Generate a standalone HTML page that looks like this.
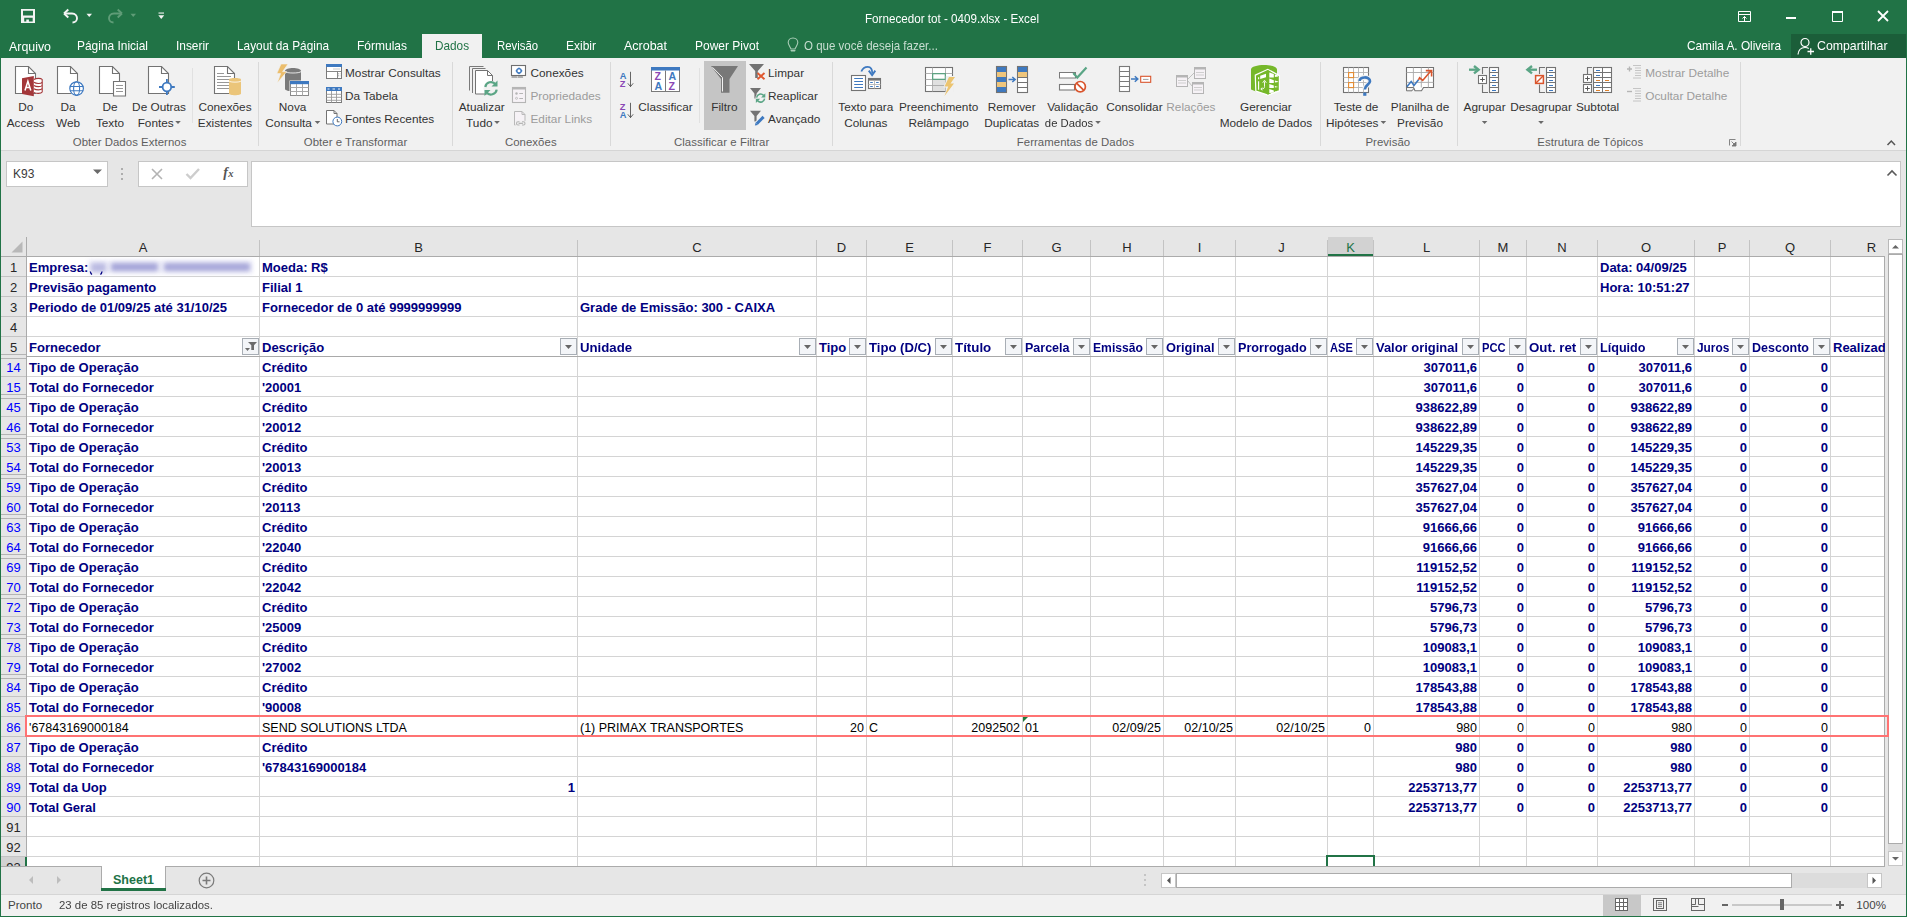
<!DOCTYPE html><html><head><meta charset="utf-8"><style>
*{margin:0;padding:0;box-sizing:border-box}
html,body{width:1907px;height:917px;overflow:hidden;background:#217346}
body{position:relative;font-family:"Liberation Sans",sans-serif}
.t{position:absolute;white-space:nowrap}
.r{position:absolute;display:block}
</style></head><body><div class="r" style="left:0px;top:0px;width:1907px;height:917px;background:#217346;"></div>
<div class="t " style="top:11.82px;font-size:12.8px;line-height:14.30px;color:#ffffff;left:552px;width:800px;text-align:center;transform:scaleX(0.9094);transform-origin:400px 0;">Fornecedor tot - 0409.xlsx - Excel</div>
<div class="r" style="left:422px;top:34px;width:60px;height:24px;background:#f1f1f1;"></div>
<div class="t " style="top:39.60px;font-size:12.6px;line-height:14.07px;color:#ffffff;left:9px;transform:scaleX(0.9839);transform-origin:0 0;">Arquivo</div>
<div class="t " style="top:38.60px;font-size:12.6px;line-height:14.07px;color:#ffffff;left:77px;transform:scaleX(0.9480);transform-origin:0 0;">Página Inicial</div>
<div class="t " style="top:38.60px;font-size:12.6px;line-height:14.07px;color:#ffffff;left:176px;transform:scaleX(0.9437);transform-origin:0 0;">Inserir</div>
<div class="t " style="top:38.60px;font-size:12.6px;line-height:14.07px;color:#ffffff;left:237px;transform:scaleX(0.9388);transform-origin:0 0;">Layout da Página</div>
<div class="t " style="top:38.60px;font-size:12.6px;line-height:14.07px;color:#ffffff;left:357px;transform:scaleX(0.9532);transform-origin:0 0;">Fórmulas</div>
<div class="t " style="top:38.60px;font-size:12.6px;line-height:14.07px;color:#ffffff;left:497px;transform:scaleX(0.9014);transform-origin:0 0;">Revisão</div>
<div class="t " style="top:38.60px;font-size:12.6px;line-height:14.07px;color:#ffffff;left:566px;transform:scaleX(0.9529);transform-origin:0 0;">Exibir</div>
<div class="t " style="top:38.60px;font-size:12.6px;line-height:14.07px;color:#ffffff;left:624px;transform:scaleX(0.9910);transform-origin:0 0;">Acrobat</div>
<div class="t " style="top:38.60px;font-size:12.6px;line-height:14.07px;color:#ffffff;left:695px;transform:scaleX(0.9526);transform-origin:0 0;">Power Pivot</div>
<div class="t " style="top:38.60px;font-size:12.6px;line-height:14.07px;color:#217346;left:435px;transform:scaleX(0.9343);transform-origin:0 0;">Dados</div>
<div class="t " style="top:40.46px;font-size:12.2px;line-height:13.63px;color:#c7ddd0;left:804px;transform:scaleX(0.9458);transform-origin:0 0;">O que você deseja fazer...</div>
<div class="t " style="top:38.60px;font-size:12.6px;line-height:14.07px;color:#ffffff;left:1687px;transform:scaleX(0.9394);transform-origin:0 0;">Camila A. Oliveira</div>
<div class="r" style="left:1791px;top:34px;width:115px;height:24px;background:#1b5e39;"></div>
<div class="t " style="top:38.60px;font-size:12.6px;line-height:14.07px;color:#ffffff;left:1817px;transform:scaleX(0.9785);transform-origin:0 0;">Compartilhar</div>
<div class="r" style="left:1px;top:58px;width:1905px;height:92px;background:#f1f1f1;"></div>
<div class="r" style="left:1px;top:150px;width:1905px;height:1px;background:#d5d5d5;"></div>
<div class="r" style="left:1px;top:151px;width:1905px;height:86px;background:#e6e6e6;"></div>
<svg class="r" style="left:21px;top:9px" width="14" height="14" viewBox="0 0 14 14"><path fill-rule="evenodd" fill="#f4f4f4" d="M0 0H14V14H0Z M2 1.7H12V6.6H2Z M3.2 8.8H11.7V12.4H3.2Z M5.3 10.4H7.9V12.4H5.3Z"/></svg>
<svg class="r" style="left:62px;top:8px" width="18" height="16" viewBox="0 0 18 16"><path d="M3 5.5 H10 C13.5 5.5 15 8 15 10.3 C15 12.8 13 14.5 10.5 14.5" fill="none" stroke="#f4f4f4" stroke-width="1.9"/><path d="M2 5.5 L6.3 1.5 M2 5.5 L6.3 9.5" stroke="#f4f4f4" stroke-width="1.9" fill="none"/></svg>
<svg class="r" style="left:86px;top:13px" width="7" height="5" viewBox="0 0 7 5"><path d="M0.5 0.8 H6 L3.25 4 Z" fill="#f4f4f4"/></svg>
<svg class="r" style="left:106px;top:8px" width="18" height="16" viewBox="0 0 18 16"><g transform="translate(18,0) scale(-1,1)"><path d="M3 5.5 H10 C13.5 5.5 15 8 15 10.3 C15 12.8 13 14.5 10.5 14.5" fill="none" stroke="#5f9c77" stroke-width="1.9"/><path d="M2 5.5 L6.3 1.5 M2 5.5 L6.3 9.5" stroke="#5f9c77" stroke-width="1.9" fill="none"/></g></svg>
<svg class="r" style="left:130px;top:13px" width="7" height="5" viewBox="0 0 7 5"><path d="M0.5 0.8 H6 L3.25 4 Z" fill="#5f9c77"/></svg>
<svg class="r" style="left:158px;top:12px" width="7" height="8" viewBox="0 0 7 8"><path d="M0.5 0.5 H6 V1.6 H0.5 Z" fill="#f4f4f4"/><path d="M0.3 3.3 H6.2 L3.25 7 Z" fill="#f4f4f4"/></svg>
<svg class="r" style="left:1738px;top:11px" width="14" height="11" viewBox="0 0 14 11"><path d="M0.5 0.5 H12.5 V10.5 H0.5 Z M0.5 3.5 H12.5" fill="none" stroke="#fff" stroke-width="1"/><path d="M6.5 10.5 V5.5 M4.5 7.5 L6.5 5.5 L8.5 7.5" fill="none" stroke="#fff" stroke-width="1"/></svg>
<div class="r" style="left:1786px;top:17px;width:10px;height:2px;background:#ffffff;"></div>
<svg class="r" style="left:1832px;top:11px" width="11" height="11" viewBox="0 0 11 11"><path d="M0.5 1 H10.5 V10.5 H0.5 Z" fill="none" stroke="#fff" stroke-width="1"/><path d="M0 0 H11 V2 H0Z" fill="#fff"/></svg>
<svg class="r" style="left:1877px;top:10px" width="12" height="12" viewBox="0 0 12 12"><path d="M1 1 L11 11 M11 1 L1 11" stroke="#fff" stroke-width="1.8"/></svg>
<svg class="r" style="left:787px;top:37px" width="12" height="16" viewBox="0 0 12 16"><path d="M6 1 C3 1 1.2 3.3 1.2 5.6 C1.2 7.9 3.3 9.8 4 12 H8 C8.7 9.8 10.8 7.9 10.8 5.6 C10.8 3.3 9 1 6 1 Z" fill="none" stroke="#aacdb7" stroke-width="1.1"/><path d="M3.4 13 H8.6 L8 14.5 H4 Z" fill="#aacdb7"/></svg>
<svg class="r" style="left:1797px;top:37px" width="18" height="19" viewBox="0 0 18 19"><circle cx="8" cy="5.5" r="4" fill="none" stroke="#fff" stroke-width="1.2"/><path d="M1 17.5 C1.5 12.5 4 10.5 8 10.5 C9.5 10.5 10.8 10.8 11.8 11.5" fill="none" stroke="#fff" stroke-width="1.2"/><path d="M10.5 14.5 H17 M13.75 11.2 V17.8" stroke="#fff" stroke-width="1.3"/></svg>
<div class="r" style="left:258px;top:62px;width:1px;height:84px;background:#d9d9d9;"></div>
<div class="r" style="left:452px;top:62px;width:1px;height:84px;background:#d9d9d9;"></div>
<div class="r" style="left:610px;top:62px;width:1px;height:84px;background:#d9d9d9;"></div>
<div class="r" style="left:832px;top:62px;width:1px;height:84px;background:#d9d9d9;"></div>
<div class="r" style="left:1320px;top:62px;width:1px;height:84px;background:#d9d9d9;"></div>
<div class="r" style="left:1457px;top:62px;width:1px;height:84px;background:#d9d9d9;"></div>
<div class="r" style="left:1740px;top:62px;width:1px;height:84px;background:#d9d9d9;"></div>
<div class="r" style="left:192px;top:68px;width:1px;height:55px;background:#e1e1e1;"></div>
<div class="r" style="left:699px;top:68px;width:1px;height:55px;background:#e1e1e1;"></div>
<div class="t " style="top:135.68px;font-size:11.4px;line-height:12.73px;color:#5e5e5e;left:-270.4px;width:800px;text-align:center;letter-spacing:0.05px;">Obter Dados Externos</div>
<div class="t " style="top:135.68px;font-size:11.4px;line-height:12.73px;color:#5e5e5e;left:-44.5px;width:800px;text-align:center;letter-spacing:0.05px;">Obter e Transformar</div>
<div class="t " style="top:135.68px;font-size:11.4px;line-height:12.73px;color:#5e5e5e;left:130.79999999999995px;width:800px;text-align:center;letter-spacing:0.05px;">Conexões</div>
<div class="t " style="top:135.68px;font-size:11.4px;line-height:12.73px;color:#5e5e5e;left:321.70000000000005px;width:800px;text-align:center;letter-spacing:0.05px;">Classificar e Filtrar</div>
<div class="t " style="top:135.68px;font-size:11.4px;line-height:12.73px;color:#5e5e5e;left:675.5px;width:800px;text-align:center;letter-spacing:0.05px;">Ferramentas de Dados</div>
<div class="t " style="top:135.68px;font-size:11.4px;line-height:12.73px;color:#5e5e5e;left:987.8px;width:800px;text-align:center;letter-spacing:0.05px;">Previsão</div>
<div class="t " style="top:135.68px;font-size:11.4px;line-height:12.73px;color:#5e5e5e;left:1190.3px;width:800px;text-align:center;letter-spacing:0.05px;">Estrutura de Tópicos</div>
<div class="r" style="left:704px;top:61px;width:42px;height:69px;background:#c5c5c5;"></div>
<div class="t " style="top:101.32px;font-size:11.8px;line-height:13.18px;color:#333333;left:-374.3px;width:800px;text-align:center;">Do</div>
<div class="t " style="top:117.32px;font-size:11.8px;line-height:13.18px;color:#333333;left:-374.3px;width:800px;text-align:center;">Access</div>
<div class="t " style="top:101.32px;font-size:11.8px;line-height:13.18px;color:#333333;left:-332px;width:800px;text-align:center;">Da</div>
<div class="t " style="top:117.32px;font-size:11.8px;line-height:13.18px;color:#333333;left:-332px;width:800px;text-align:center;">Web</div>
<div class="t " style="top:101.32px;font-size:11.8px;line-height:13.18px;color:#333333;left:-290px;width:800px;text-align:center;">De</div>
<div class="t " style="top:117.32px;font-size:11.8px;line-height:13.18px;color:#333333;left:-290px;width:800px;text-align:center;">Texto</div>
<div class="t " style="top:101.32px;font-size:11.8px;line-height:13.18px;color:#333333;left:-241px;width:800px;text-align:center;">De Outras</div>
<div class="t " style="top:117.32px;font-size:11.8px;line-height:13.18px;color:#333333;left:-244.3px;width:800px;text-align:center;">Fontes</div>
<div class="t " style="top:101.32px;font-size:11.8px;line-height:13.18px;color:#333333;left:-175px;width:800px;text-align:center;">Conexões</div>
<div class="t " style="top:117.32px;font-size:11.8px;line-height:13.18px;color:#333333;left:-175px;width:800px;text-align:center;">Existentes</div>
<div class="t " style="top:101.32px;font-size:11.8px;line-height:13.18px;color:#333333;left:-107.39999999999998px;width:800px;text-align:center;">Nova</div>
<div class="t " style="top:117.32px;font-size:11.8px;line-height:13.18px;color:#333333;left:-111.39999999999998px;width:800px;text-align:center;">Consulta</div>
<div class="t " style="top:101.32px;font-size:11.8px;line-height:13.18px;color:#333333;left:81.69999999999999px;width:800px;text-align:center;">Atualizar</div>
<div class="t " style="top:117.32px;font-size:11.8px;line-height:13.18px;color:#333333;left:79.30000000000001px;width:800px;text-align:center;">Tudo</div>
<div class="t " style="top:101.32px;font-size:11.8px;line-height:13.18px;color:#333333;left:465.79999999999995px;width:800px;text-align:center;">Texto para</div>
<div class="t " style="top:117.32px;font-size:11.8px;line-height:13.18px;color:#333333;left:465.79999999999995px;width:800px;text-align:center;">Colunas</div>
<div class="t " style="top:101.32px;font-size:11.8px;line-height:13.18px;color:#333333;left:538.6px;width:800px;text-align:center;">Preenchimento</div>
<div class="t " style="top:117.32px;font-size:11.8px;line-height:13.18px;color:#333333;left:538.6px;width:800px;text-align:center;">Relâmpago</div>
<div class="t " style="top:101.32px;font-size:11.8px;line-height:13.18px;color:#333333;left:611.7px;width:800px;text-align:center;">Remover</div>
<div class="t " style="top:117.32px;font-size:11.8px;line-height:13.18px;color:#333333;left:611.7px;width:800px;text-align:center;">Duplicatas</div>
<div class="t " style="top:101.32px;font-size:11.8px;line-height:13.18px;color:#333333;left:672.5999999999999px;width:800px;text-align:center;">Validação</div>
<div class="t " style="top:117.32px;font-size:11.8px;line-height:13.18px;color:#333333;left:668.5px;width:800px;text-align:center;transform:scaleX(0.9561);transform-origin:400px 0;">de Dados</div>
<div class="t " style="top:101.32px;font-size:11.8px;line-height:13.18px;color:#333333;left:956px;width:800px;text-align:center;">Teste de</div>
<div class="t " style="top:117.32px;font-size:11.8px;line-height:13.18px;color:#333333;left:952.2px;width:800px;text-align:center;">Hipóteses</div>
<div class="t " style="top:101.32px;font-size:11.8px;line-height:13.18px;color:#333333;left:1020px;width:800px;text-align:center;">Planilha de</div>
<div class="t " style="top:117.32px;font-size:11.8px;line-height:13.18px;color:#333333;left:1020px;width:800px;text-align:center;">Previsão</div>
<div class="t " style="top:101.32px;font-size:11.8px;line-height:13.18px;color:#333333;left:865.9000000000001px;width:800px;text-align:center;">Gerenciar</div>
<div class="t " style="top:117.32px;font-size:11.8px;line-height:13.18px;color:#333333;left:865.9000000000001px;width:800px;text-align:center;">Modelo de Dados</div>
<div class="t " style="top:101.32px;font-size:11.8px;line-height:13.18px;color:#333333;left:265.5px;width:800px;text-align:center;">Classificar</div>
<div class="t " style="top:101.32px;font-size:11.8px;line-height:13.18px;color:#333333;left:324.4px;width:800px;text-align:center;">Filtro</div>
<div class="t " style="top:101.32px;font-size:11.8px;line-height:13.18px;color:#333333;left:734.4000000000001px;width:800px;text-align:center;">Consolidar</div>
<div class="t " style="top:101.32px;font-size:11.8px;line-height:13.18px;color:#333333;left:1084.6px;width:800px;text-align:center;">Agrupar</div>
<div class="t " style="top:101.32px;font-size:11.8px;line-height:13.18px;color:#333333;left:1141px;width:800px;text-align:center;">Desagrupar</div>
<div class="t " style="top:101.32px;font-size:11.8px;line-height:13.18px;color:#333333;left:1197.6px;width:800px;text-align:center;">Subtotal</div>
<div class="t " style="top:101.32px;font-size:11.8px;line-height:13.18px;color:#9c9c9c;left:790.9000000000001px;width:800px;text-align:center;">Relações</div>
<div class="t " style="top:67.32px;font-size:11.8px;line-height:13.18px;color:#333333;left:345px;">Mostrar Consultas</div>
<div class="t " style="top:90.32px;font-size:11.8px;line-height:13.18px;color:#333333;left:345px;">Da Tabela</div>
<div class="t " style="top:113.32px;font-size:11.8px;line-height:13.18px;color:#333333;left:345px;">Fontes Recentes</div>
<div class="t " style="top:67.32px;font-size:11.8px;line-height:13.18px;color:#333333;left:530.5px;">Conexões</div>
<div class="t " style="top:90.32px;font-size:11.8px;line-height:13.18px;color:#9c9c9c;left:530.5px;">Propriedades</div>
<div class="t " style="top:113.32px;font-size:11.8px;line-height:13.18px;color:#9c9c9c;left:530.5px;">Editar Links</div>
<div class="t " style="top:67.32px;font-size:11.8px;line-height:13.18px;color:#333333;left:768px;">Limpar</div>
<div class="t " style="top:90.32px;font-size:11.8px;line-height:13.18px;color:#333333;left:768px;">Reaplicar</div>
<div class="t " style="top:113.32px;font-size:11.8px;line-height:13.18px;color:#333333;left:768px;">Avançado</div>
<div class="t " style="top:67.32px;font-size:11.8px;line-height:13.18px;color:#9c9c9c;left:1645.3px;">Mostrar Detalhe</div>
<div class="t " style="top:90.32px;font-size:11.8px;line-height:13.18px;color:#9c9c9c;left:1645.3px;">Ocultar Detalhe</div>
<svg class="r" style="left:0px;top:0px" width="1907" height="160" viewBox="0 0 1907 160"><path d="M15.5 66.5 H28.5 L35.5 73.5 V93.5 H15.5 Z" fill="#fff" stroke="#737373" stroke-width="1.1"/><path d="M28.5 66.5 V73.5 H35.5" fill="none" stroke="#737373" stroke-width="1.1"/><path d="M22 78.3 L33.8 76 V96.2 L22 94 Z" fill="#a4373a"/><path d="M25 90.5 L27.9 81.2 L30.8 90.5 M26 87.6 H29.8" fill="none" stroke="#fff" stroke-width="1.5"/><path d="M34 79.5 C36 78 41 78 42.2 79.5 V92 C41 93.8 36 93.8 34 92.4" fill="#fff" stroke="#a4373a" stroke-width="1.1"/><path d="M34 82.3 C36 83.8 41 83.8 42.2 82.3" fill="none" stroke="#a4373a" stroke-width="1.1"/><path d="M34 85.5 C36 87.0 41 87.0 42.2 85.5" fill="none" stroke="#a4373a" stroke-width="1.1"/><path d="M34 88.7 C36 90.2 41 90.2 42.2 88.7" fill="none" stroke="#a4373a" stroke-width="1.1"/><path d="M57.5 66.5 H70.5 L77.5 73.5 V93.5 H57.5 Z" fill="#fff" stroke="#737373" stroke-width="1.1"/><path d="M70.5 66.5 V73.5 H77.5" fill="none" stroke="#737373" stroke-width="1.1"/><circle cx="76.6" cy="88.6" r="7.4" fill="#fff"/><circle cx="76.6" cy="88.6" r="6.8" fill="none" stroke="#3e79c0" stroke-width="1.2"/><ellipse cx="76.6" cy="88.6" rx="3" ry="6.8" fill="none" stroke="#3e79c0" stroke-width="1.1"/><path d="M70 86.5 H83.2 M70 90.8 H83.2" stroke="#3e79c0" stroke-width="1.1"/><path d="M99.5 66.5 H112.5 L119.5 73.5 V93.5 H99.5 Z" fill="#fff" stroke="#737373" stroke-width="1.1"/><path d="M112.5 66.5 V73.5 H119.5" fill="none" stroke="#737373" stroke-width="1.1"/><path d="M113.5 81.5 H125.5 V96 H113.5 Z" fill="#fff" stroke="#737373" stroke-width="1.1"/><path d="M116 85.5 H123 M116 88.5 H123 M116 91.5 H123" stroke="#8a8a8a" stroke-width="0.9"/><path d="M148.5 66.5 H161.5 L168.5 73.5 V93.5 H148.5 Z" fill="#fff" stroke="#737373" stroke-width="1.1"/><path d="M161.5 66.5 V73.5 H168.5" fill="none" stroke="#737373" stroke-width="1.1"/><circle cx="166.9" cy="87" r="4.3" fill="#fff" stroke="#3e79c0" stroke-width="1.8"/><path d="M166.9 79 V82.5 M166.9 91.5 V95 M159 87 H162.5 M171.3 87 H174.8" stroke="#3e79c0" stroke-width="1.8"/><path d="M214.5 66.5 H227.5 L234.5 73.5 V93.5 H214.5 Z" fill="#fff" stroke="#737373" stroke-width="1.1"/><path d="M227.5 66.5 V73.5 H234.5" fill="none" stroke="#737373" stroke-width="1.1"/><path d="M217 73.5 H224 M217 76.5 H231 M217 79.5 H230 M217 82.5 H230 M217 85.5 H230 M217 88.5 H230" stroke="#8c8c8c" stroke-width="0.9"/><path d="M229 79.5 C229 77.5 241 77.5 241 79.5 V93.5 C241 95.8 229 95.8 229 93.5 Z" fill="#ebc57a"/><path d="M229 81 C230 82.5 240 82.5 241 81" fill="none" stroke="#fff" stroke-width="0.8"/><path d="M285 71 C285 67 301 67 301 71 V89 C301 92 285 92 285 89 Z" fill="#7a7a7a"/><path d="M285 71.5 C286 73.5 300 73.5 301 71.5" fill="none" stroke="#f1f1f1" stroke-width="0.9"/><path d="M281 64 H288 L282.6 71.6 H286.8 L277.3 83 L280.6 73.6 H276.8 Z" fill="#ebbd6c" stroke="#f1f1f1" stroke-width="0.6"/><rect x="289.5" y="80.5" width="20" height="16" fill="#f1f1f1"/><rect x="290.5" y="81.5" width="18" height="14" fill="#fff" stroke="#8a8a8a" stroke-width="1"/><rect x="290" y="81" width="19" height="3.2" fill="#3e79c0"/><path d="M290.5 87.5 H308.5 M290.5 91.5 H308.5 M296.5 84 V95.5 M302.5 84 V95.5" stroke="#a8a8a8" stroke-width="1"/><rect x="326.5" y="64.5" width="15" height="14" fill="#fff" stroke="#7a7a7a" stroke-width="1"/><rect x="326" y="64" width="16" height="3" fill="#3e79c0"/><path d="M326.5 71.5 H341.5 M337.5 71.5 V78.5" stroke="#7a7a7a" stroke-width="0.9"/><path d="M333.5 69 H340 M338.2 73.8 H340.5 M338.2 75.8 H340.5" stroke="#7a7a7a" stroke-width="0.8" stroke-dasharray="1 1"/><rect x="326.5" y="87.5" width="15" height="15" fill="#fff" stroke="#7a7a7a" stroke-width="1"/><rect x="326" y="87" width="16" height="4" fill="#3e79c0"/><path d="M327.5 89 H329.5 M332.5 89 H335 M338 89 H340" stroke="#fff" stroke-width="0.9"/><path d="M326.5 94.3 H341.5 M326.5 97.3 H341.5 M326.5 100.3 H341.5 M331.5 91 V102.5 M336.5 91 V102.5" stroke="#9a9a9a" stroke-width="0.9"/><path d="M326.5 110.5 H334.0 L337.0 113.5 V124.0 H326.5 Z" fill="#fff" stroke="#737373" stroke-width="1"/><path d="M334.0 110.5 V113.5 H337.0" fill="none" stroke="#737373" stroke-width="1"/><circle cx="337.3" cy="121.5" r="4.4" fill="#fff" stroke="#3e79c0" stroke-width="1"/><path d="M337.3 119 V121.8 H339.5" fill="none" stroke="#555" stroke-width="0.9"/><path d="M469.5 90.5 V66.5 H483.5" fill="none" stroke="#7a7a7a" stroke-width="1"/><path d="M472.5 93 V68.5 H485.5" fill="none" stroke="#7a7a7a" stroke-width="1"/><path d="M475.5 70.5 H487.5 L492.5 75.5 V94.0 H475.5 Z" fill="#fff" stroke="#737373" stroke-width="1"/><path d="M487.5 70.5 V75.5 H492.5" fill="none" stroke="#737373" stroke-width="1"/><circle cx="491" cy="88.3" r="7.5" fill="#f1f1f1"/><path d="M485.3 87 A5.8 5.8 0 0 1 495.5 84.2" fill="none" stroke="#5aa585" stroke-width="2.2"/><path d="M497.5 80.5 V86.5 H491.5 Z" fill="#5aa585"/><path d="M496.7 89.6 A5.8 5.8 0 0 1 486.5 92.4" fill="none" stroke="#5aa585" stroke-width="2.2"/><path d="M484.5 96 V90 H490.5 Z" fill="#5aa585"/><rect x="511.5" y="65.5" width="14" height="10" fill="#fff" stroke="#6f6f6f" stroke-width="1.1"/><path d="M512 77 H516.5 M518 77 H522.5" stroke="#6f6f6f" stroke-width="1.2" stroke-linecap="round"/><circle cx="519" cy="70.8" r="2.2" fill="none" stroke="#3e79c0" stroke-width="1.3"/><circle cx="519" cy="68.3" r="0.9" fill="#3e79c0"/><circle cx="519" cy="73.3" r="0.9" fill="#3e79c0"/><circle cx="516.5" cy="70.8" r="0.9" fill="#3e79c0"/><circle cx="521.5" cy="70.8" r="0.9" fill="#3e79c0"/><rect x="512.5" y="87.5" width="13" height="15" fill="#f6f2f6" stroke="#b5b5b5" stroke-width="1.1"/><rect x="512" y="87" width="14" height="2.5" fill="#b5b5b5"/><circle cx="516.5" cy="93.5" r="1.2" fill="#b5b5b5"/><circle cx="516.5" cy="98.3" r="1" fill="none" stroke="#b5b5b5" stroke-width="0.8"/><path d="M519.3 93.5 H523 M519.3 98.5 H523" stroke="#b5b5b5" stroke-width="1"/><path d="M514.5 111.5 H522.0 L525.0 114.5 V125.0 H514.5 Z" fill="#f6f2f6" stroke="#b9b9b9" stroke-width="1"/><path d="M522.0 111.5 V114.5 H525.0" fill="none" stroke="#b9b9b9" stroke-width="1"/><rect x="515.5" y="120.8" width="11" height="5.2" fill="#f1f1f1"/><path d="M519.5 121.8 H518 C516 121.8 516 125 518 125 H519.5 M522 121.8 H523.5 C525.5 121.8 525.5 125 523.5 125 H522 M518.6 123.4 H522.9" fill="none" stroke="#b5b5b5" stroke-width="1.1"/><text x="619.8" y="79.1" font-family="Liberation Sans" font-weight="bold" font-size="9.3" fill="#3e79c0">A</text><text x="619.8" y="87.39999999999999" font-family="Liberation Sans" font-weight="bold" font-size="9.3" fill="#8a47b5">Z</text><path d="M630.5 71.8 V86.8 M627.8 83.3 L630.5 86.6 L633.2 83.3" fill="none" stroke="#555" stroke-width="0.9"/><text x="619.8" y="110.1" font-family="Liberation Sans" font-weight="bold" font-size="9.3" fill="#8a47b5">Z</text><text x="619.8" y="118.39999999999999" font-family="Liberation Sans" font-weight="bold" font-size="9.3" fill="#3e79c0">A</text><path d="M630.5 102.8 V117.8 M627.8 114.3 L630.5 117.6 L633.2 114.3" fill="none" stroke="#555" stroke-width="0.9"/><rect x="651.5" y="67.5" width="28" height="24" fill="#fff" stroke="#7a7a7a" stroke-width="1"/><rect x="651" y="67" width="29" height="3.5" fill="#3e79c0"/><path d="M665.5 70.5 V91.5" stroke="#7a7a7a" stroke-width="1"/><text x="654.5" y="80.3" font-family="Liberation Sans" font-weight="bold" font-size="10.6" fill="#8a47b5">Z</text><text x="654.5" y="90.3" font-family="Liberation Sans" font-weight="bold" font-size="10.6" fill="#3e79c0">A</text><text x="668.5" y="80.3" font-family="Liberation Sans" font-weight="bold" font-size="10.6" fill="#3e79c0">A</text><text x="668.5" y="90.3" font-family="Liberation Sans" font-weight="bold" font-size="10.6" fill="#8a47b5">Z</text><path d="M711 66 H738 L729.5 79 V92.7 H721 V79 Z" fill="#787878"/><path d="M712.5 67.3 L722.5 77.5 V91.5" fill="none" stroke="#fff" stroke-width="0.9"/><path d="M749 64 H764 L757.8 71 V78 H755.2 V71 Z" fill="#737373"/><path d="M757.5 73 L764.5 79.3 M764.5 73 L757.5 79.3" stroke="#e0582f" stroke-width="1.9"/><path d="M750 88 H761 L756.6 93.5 V98.5 H754.4 V93.5 Z" fill="#737373"/><circle cx="760.6" cy="98.1" r="5.2" fill="#f1f1f1"/><path d="M756.6 97.6 A4 4 0 0 1 763.6 95.5" fill="none" stroke="#5aa585" stroke-width="1.5"/><path d="M765.3 93.2 V97.4 H761.1 Z" fill="#5aa585"/><path d="M764.6 98.6 A4 4 0 0 1 757.6 100.7" fill="none" stroke="#5aa585" stroke-width="1.5"/><path d="M755.9 103 V98.8 H760.1 Z" fill="#5aa585"/><path d="M750 110.7 H761 L756.6 116 V121.4 H754.4 V116 Z" fill="#737373"/><path d="M756.5 124 L763.5 117" stroke="#f1f1f1" stroke-width="4.6"/><path d="M756.8 123.7 L763.6 116.9" stroke="#3e79c0" stroke-width="3"/><path d="M754.9 125.6 L755.6 122.6 L757.9 124.9 Z" fill="#3e79c0"/><rect x="851.5" y="75.5" width="14" height="15" fill="#fff" stroke="#737373" stroke-width="1.1"/><path d="M854.2 78.5 H863 M854.2 81.5 H863 M854.2 84.5 H863 M854.2 87.5 H863" stroke="#3e79c0" stroke-width="1.2"/><rect x="868.5" y="78.5" width="12" height="10" fill="#fff" stroke="#737373" stroke-width="1.1"/><rect x="868" y="78" width="13" height="2.6" fill="#737373"/><path d="M874.5 80.5 V88.5 M868.5 84.5 H880.5" stroke="#b5b5b5" stroke-width="0.9"/><path d="M870.2 82.5 H872.8 M876.1 82.5 H878.7 M870.2 86.5 H872.8 M876.1 86.5 H878.7" stroke="#3e79c0" stroke-width="1"/><path d="M861.3 71.5 C863 67.5 866 66.8 867.8 66.8 C870.5 66.8 872.3 69 872.3 73.5" fill="none" stroke="#3e79c0" stroke-width="1.8"/><path d="M868.8 70.6 L872.1 75.2 L875.3 70.6" fill="none" stroke="#3e79c0" stroke-width="1.9"/><rect x="925.5" y="67.5" width="27" height="24" fill="#fff" stroke="#737373" stroke-width="1.1"/><path d="M925.5 73.5 H952.5 M925.5 79.5 H952.5 M925.5 85.5 H952.5 M932.5 67.5 V91.5 M945.5 67.5 V91.5" stroke="#a8a8a8" stroke-width="0.9"/><rect x="933" y="80" width="12" height="11" fill="#e0e0e0"/><path d="M933 85.5 H945" stroke="#a8a8a8" stroke-width="0.9"/><rect x="932.7" y="73.7" width="12.6" height="5.6" fill="#fff" stroke="#4d9c76" stroke-width="1.1"/><rect x="945.8" y="76" width="8" height="17" fill="#f1f1f1"/><path d="M948.4 76 H956.6 L951.9 82.7 H955.8 L943.6 97.6 L947.2 87.4 H943.3 Z" fill="#f1f1f1"/><path d="M949 77.1 H955 L950.5 83.5 H954 L944.5 96 L948.2 86.6 H944.5 Z" fill="#ecc470"/><rect x="996.5" y="66.5" width="10" height="26" fill="#3e79c0" stroke="#737373" stroke-width="1.1"/><rect x="997" y="72" width="9" height="5" fill="#eec57c"/><rect x="997" y="82" width="9" height="5" fill="#eec57c"/><rect x="1017.5" y="66.5" width="10" height="26" fill="#fff" stroke="#737373" stroke-width="1.1"/><rect x="1018" y="67" width="9" height="5" fill="#3e79c0"/><rect x="1018" y="72" width="9" height="5" fill="#eec57c"/><path d="M1017.5 77.5 H1027.5 M1017.5 82.5 H1027.5 M1017.5 87.5 H1027.5" stroke="#737373" stroke-width="1"/><path d="M1008.5 79.5 H1015 M1012.3 77 L1015.2 79.5 L1012.3 82" fill="none" stroke="#3e79c0" stroke-width="1.5"/><rect x="1059.5" y="72.5" width="16" height="5.5" fill="#fff" stroke="#7a7a7a" stroke-width="1"/><rect x="1059.5" y="84.5" width="15" height="5.5" fill="#fff" stroke="#7a7a7a" stroke-width="1.1"/><path d="M1073.3 73 L1077.3 77.6 L1086.5 67.5" fill="none" stroke="#5aa585" stroke-width="2.2"/><circle cx="1080.2" cy="86.7" r="5.2" fill="#fff" stroke="#d9542c" stroke-width="1.7"/><path d="M1076.8 83.3 L1083.6 90.1" stroke="#d9542c" stroke-width="1.7"/><rect x="1119.5" y="66.5" width="10" height="25" fill="#fff" stroke="#7a7a7a" stroke-width="1.1"/><path d="M1119.5 71.5 H1129.5 M1119.5 76.5 H1129.5 M1119.5 81.5 H1129.5 M1119.5 86.5 H1129.5" stroke="#7a7a7a" stroke-width="1"/><path d="M1131 79 H1137.5 M1134.8 76.3 L1137.8 79 L1134.8 81.7" fill="none" stroke="#3e79c0" stroke-width="1.5"/><rect x="1140.7" y="76.3" width="10" height="6" fill="#fff" stroke="#d9542c" stroke-width="1.1"/><path d="M1143 79.4 H1148.5" stroke="#888" stroke-width="0.8"/><rect x="1176.5" y="75.5" width="11" height="11" fill="#f6f2f6" stroke="#b5b5b5" stroke-width="1"/><rect x="1176" y="75" width="12" height="2.5" fill="#b5b5b5"/><path d="M1178 80.5 H1186 M1178 83 H1186" stroke="#c5c5c5" stroke-width="0.8"/><rect x="1194.5" y="67.5" width="11" height="11" fill="#f6f2f6" stroke="#b5b5b5" stroke-width="1"/><rect x="1194" y="67" width="12" height="2.5" fill="#b5b5b5"/><path d="M1196 72.5 H1204 M1196 75 H1204" stroke="#c5c5c5" stroke-width="0.8"/><rect x="1192.5" y="82.5" width="11" height="11" fill="#f6f2f6" stroke="#b5b5b5" stroke-width="1"/><rect x="1192" y="82" width="12" height="2.5" fill="#b5b5b5"/><path d="M1194 87.5 H1202 M1194 90 H1202" stroke="#c5c5c5" stroke-width="0.8"/><path d="M1188 79 L1194 73 M1188 81 L1192 86" stroke="#b5b5b5" stroke-width="0.8"/><path d="M1251 69.5 C1251 63.5 1277 63.5 1277 69.5 V76 H1256 V91.5 L1251 89.5 Z" fill="#76b82a"/><path d="M1255.3 75.1 L1267.8 69.3 L1279.4 75.7 V90.8 L1268 95 L1255.8 91 Z" fill="#76b82a" stroke="#fff" stroke-width="1.2"/><path d="M1268 70.5 V94.5" stroke="#76b82a" stroke-width="1.6"/><path d="M1269.3 72.4 L1273.8 74.0 V77.6 L1269.3 77.6 Z" fill="#fff"/><path d="M1274.9 74.4 L1278.2 75.4 V76.6 L1274.9 77.1 Z" fill="#fff"/><path d="M1269.3 78.6 L1273.8 80.19999999999999 V83.0 L1269.3 83.0 Z" fill="#fff"/><path d="M1274.9 80.6 L1278.2 81.6 V82.0 L1274.9 82.5 Z" fill="#fff"/><path d="M1269.3 84.0 L1273.8 85.6 V88.0 L1269.3 88.0 Z" fill="#fff"/><path d="M1274.9 86.0 L1278.2 87.0 V87.0 L1274.9 87.5 Z" fill="#fff"/><path d="M1269.3 89.0 L1273.8 90.6 V92.6 L1269.3 93.0 Z" fill="#fff"/><path d="M1274.9 91.0 L1278.2 92.0 V90.6 L1274.9 92.0 Z" fill="#fff"/><path d="M1258.6 77.2 V79.2 M1258.6 81.3 V89.8" stroke="#fff" stroke-width="1.1"/><path d="M1260.2 75.7 L1266 73.7 V77.3 L1260.2 79 Z" fill="#fff"/><path d="M1264.5 81.5 V86.5 C1264.5 88.2 1263.5 89 1261.5 89" fill="none" stroke="#fff" stroke-width="0.9"/><path d="M1262.7 82.8 L1264.5 80.3 L1266.3 82.8 M1262.3 87.7 L1260.8 89 L1262.3 90.3" fill="none" stroke="#fff" stroke-width="0.9"/><rect x="1343.5" y="67.5" width="25" height="25" fill="#fff" stroke="#737373" stroke-width="1.1"/><path d="M1343.5 72.5 H1368.5 M1343.5 77.5 H1368.5 M1343.5 82.5 H1368.5 M1343.5 87.5 H1368.5 M1348.5 67.5 V92.5 M1353.5 67.5 V92.5 M1358.5 67.5 V92.5 M1363.5 67.5 V92.5" stroke="#b4b4b4" stroke-width="0.9"/><rect x="1348.6" y="72.6" width="5" height="5" fill="#fff" stroke="#e58a2e" stroke-width="1.1"/><rect x="1348.6" y="82.6" width="5" height="5" fill="#fff" stroke="#e58a2e" stroke-width="1.1"/><path d="M1359.6 81 C1359.2 76.5 1370 76 1370 81.3 C1370 84.5 1364.8 85 1364.8 89.5" fill="none" stroke="#f1f1f1" stroke-width="5"/><path d="M1359.6 81 C1359.2 76.5 1370 76 1370 81.3 C1370 84.5 1364.8 85 1364.8 89.5" fill="none" stroke="#3e79c0" stroke-width="2.7"/><rect x="1363.2" y="92.6" width="3.2" height="3.2" fill="#3e79c0"/><path d="M1406.5 67.5 H1433.5 V87.5 H1423.5 L1421.5 90.8 H1415 L1413.5 87.5 H1406.5 Z" fill="#fff" stroke="#737373" stroke-width="1.1"/><path d="M1406.5 87.5 V90.8 H1412 L1413.8 88.5" fill="none" stroke="#737373" stroke-width="1"/><path d="M1406.5 72.5 H1433.5 M1406.5 82.4 H1433.5 M1413.4 67.5 V87.5 M1421.3 67.5 V87.5 M1428.4 67.5 V87.5" stroke="#a8a8a8" stroke-width="0.9"/><path d="M1406.9 86.7 L1411.2 81.5 L1414 85.4 L1418.5 79.8" fill="none" stroke="#3e79c0" stroke-width="1.6"/><path d="M1418.5 79.8 L1419.6 77.8 L1422.7 80.4 L1431.2 70.6" fill="none" stroke="#d9542c" stroke-width="1.6"/><path d="M1425.8 70.6 H1431.6 V76.4" fill="none" stroke="#d9542c" stroke-width="1.6"/><path d="M1488 67.5 H1482.5 V74 M1482.5 84.5 V92.5 H1488" fill="none" stroke="#737373" stroke-width="1.1"/><rect x="1478.5" y="75.5" width="8" height="8" fill="#fff" stroke="#737373" stroke-width="1.1"/><path d="M1480.2 79.5 H1484.8 M1482.5 77.2 V81.8" stroke="#555" stroke-width="1"/><rect x="1489.5" y="67.5" width="9" height="25" fill="#fff" stroke="#737373" stroke-width="1.1"/><path d="M1489.5 72.5 H1498.5" stroke="#737373" stroke-width="1"/><path d="M1489.5 77.5 H1498.5" stroke="#737373" stroke-width="1"/><path d="M1489.5 82.5 H1498.5" stroke="#737373" stroke-width="1"/><path d="M1489.5 87.5 H1498.5" stroke="#737373" stroke-width="1"/><path d="M1492 70.5 H1496" stroke="#3e79c0" stroke-width="1"/><path d="M1492 75.5 H1496" stroke="#3e79c0" stroke-width="1"/><path d="M1492 80.5 H1496" stroke="#3e79c0" stroke-width="1"/><path d="M1492 85.5 H1496" stroke="#3e79c0" stroke-width="1"/><path d="M1492 90.5 H1496" stroke="#3e79c0" stroke-width="1"/><path d="M1469 69.7 H1478.5" stroke="#5aa585" stroke-width="2.3"/><path d="M1474 66 L1478.6 69.7 L1474 73.4" fill="none" stroke="#5aa585" stroke-width="2.4"/><path d="M1545 67.5 H1539.5 V74 M1539.5 84.5 V92.5 H1545" fill="none" stroke="#737373" stroke-width="1.1"/><rect x="1535.6" y="75.6" width="7.8" height="7.8" fill="#fff" stroke="#d9542c" stroke-width="1.5"/><path d="M1536 83 L1543 76" stroke="#d9542c" stroke-width="1.4"/><rect x="1546.5" y="67.5" width="9" height="25" fill="#fff" stroke="#737373" stroke-width="1.1"/><path d="M1546.5 72.5 H1555.5" stroke="#737373" stroke-width="1"/><path d="M1546.5 77.5 H1555.5" stroke="#737373" stroke-width="1"/><path d="M1546.5 82.5 H1555.5" stroke="#737373" stroke-width="1"/><path d="M1546.5 87.5 H1555.5" stroke="#737373" stroke-width="1"/><path d="M1549 70.5 H1553" stroke="#3e79c0" stroke-width="1"/><path d="M1549 75.5 H1553" stroke="#3e79c0" stroke-width="1"/><path d="M1549 80.5 H1553" stroke="#3e79c0" stroke-width="1"/><path d="M1549 85.5 H1553" stroke="#3e79c0" stroke-width="1"/><path d="M1549 90.5 H1553" stroke="#3e79c0" stroke-width="1"/><path d="M1537 69.7 H1527.5" stroke="#5aa585" stroke-width="2.3"/><path d="M1532 66 L1527.4 69.7 L1532 73.4" fill="none" stroke="#5aa585" stroke-width="2.4"/><path d="M1592 67.5 H1587.5 V74.5" fill="none" stroke="#737373" stroke-width="1.1"/><rect x="1583.5" y="74.5" width="8" height="8" fill="#fff" stroke="#737373" stroke-width="1.1"/><path d="M1585.2 78.5 H1589.8 M1587.5 76.2 V80.8" stroke="#555" stroke-width="1"/><rect x="1583.5" y="84.5" width="8" height="8" fill="#fff" stroke="#737373" stroke-width="1.1"/><path d="M1585.2 88.5 H1589.8 M1587.5 86.2 V90.8" stroke="#555" stroke-width="1"/><rect x="1593.5" y="67.5" width="18" height="25" fill="#fff" stroke="#737373" stroke-width="1.1"/><path d="M1593.5 72.5 H1611.5 M1593.5 77.5 H1611.5 M1593.5 82.5 H1611.5 M1593.5 87.5 H1611.5 M1602.5 67.5 V92.5" stroke="#737373" stroke-width="1"/><path d="M1596 70.5 H1600 M1596 75.5 H1600 M1596 85.5 H1600" stroke="#3e79c0" stroke-width="1"/><path d="M1596 80.5 H1600 M1605 80.5 H1609 M1596 90.5 H1600 M1605 90.5 H1609" stroke="#e0832f" stroke-width="1"/><path d="M1627 69 H1632 M1629.5 66.5 V71.5" stroke="#b5b5b5" stroke-width="1.4"/><path d="M1633 65.5 H1641 M1635 68 H1641 M1635 70.5 H1641 M1635 73 H1641 M1635 75.5 H1641 M1633 78 H1641" stroke="#c0c0c0" stroke-width="0.9"/><path d="M1627 91.5 H1632" stroke="#b5b5b5" stroke-width="1.4"/><path d="M1633 88.5 H1641 M1635 91 H1641 M1635 93.5 H1641 M1635 96 H1641 M1635 98.5 H1641 M1633 101 H1641" stroke="#c0c0c0" stroke-width="0.9"/><path d="M1729.5 145.5 V139.5 H1735.5" fill="none" stroke="#777" stroke-width="0.9"/><path d="M1731.5 141.5 L1735.5 145.5 M1736 142 V146 H1732 Z" fill="#777" stroke="#777" stroke-width="0.9"/><path d="M1887.5 145 L1891.3 141 L1895 145" fill="none" stroke="#555" stroke-width="1.5"/><path d="M175.2 121.0 H180.8 L178 124.0 Z" fill="#6a6a6a"/><path d="M314.7 121.0 H320.3 L317.5 124.0 Z" fill="#6a6a6a"/><path d="M494.2 121.0 H499.8 L497 124.0 Z" fill="#6a6a6a"/><path d="M1095.2 121.0 H1100.8 L1098 124.0 Z" fill="#6a6a6a"/><path d="M1380.6000000000001 121.0 H1386.2 L1383.4 124.0 Z" fill="#6a6a6a"/><path d="M1481.8 121.0 H1487.3999999999999 L1484.6 124.0 Z" fill="#6a6a6a"/><path d="M1538.2 121.0 H1543.8 L1541 124.0 Z" fill="#6a6a6a"/></svg>
<div class="r" style="left:6px;top:161px;width:102px;height:26px;background:#ffffff;border:1px solid #c6c6c6;"></div>
<div class="t " style="top:168.14px;font-size:12px;line-height:13.40px;color:#3a3a3a;left:13px;">K93</div>
<div class="r" style="left:138px;top:161px;width:110px;height:26px;background:#ffffff;border:1px solid #c6c6c6;"></div>
<div class="r" style="left:251px;top:161px;width:650px;height:66px;background:#ffffff;border:1px solid #c6c6c6;"></div>
<div class="r" style="left:900px;top:161px;width:1001px;height:66px;background:#ffffff;border:1px solid #c6c6c6;border-left:none;"></div>
<svg class="r" style="left:92px;top:168px" width="12" height="8" viewBox="0 0 12 8"><path d="M1 1.5 H10 L5.5 6 Z" fill="#6a6a6a"/></svg>
<svg class="r" style="left:120px;top:166px" width="4" height="16" viewBox="0 0 4 16"><circle cx="2" cy="3" r="1" fill="#9a9a9a"/><circle cx="2" cy="8" r="1" fill="#9a9a9a"/><circle cx="2" cy="13" r="1" fill="#9a9a9a"/></svg>
<svg class="r" style="left:150px;top:168px" width="14" height="12" viewBox="0 0 14 12"><path d="M2 1 L12 11 M12 1 L2 11" stroke="#b3b3b3" stroke-width="1.6"/></svg>
<svg class="r" style="left:185px;top:167px" width="16" height="13" viewBox="0 0 16 13"><path d="M1.5 7 L5.5 11 L14 2" fill="none" stroke="#cdcdcd" stroke-width="2.4"/></svg>
<div class="t " style="top:164.83px;font-size:14px;line-height:15.64px;color:#555555;left:223.3px;font-style:italic;font-family:'Liberation Serif',serif;font-weight:bold;">f</div>
<div class="t " style="top:168.30px;font-size:10.5px;line-height:11.73px;color:#555555;left:228.3px;font-style:italic;font-family:'Liberation Serif',serif;font-weight:bold;">x</div>
<svg class="r" style="left:1886px;top:169px" width="12" height="8" viewBox="0 0 12 8"><path d="M1.5 6.5 L6 2 L10.5 6.5" fill="none" stroke="#5a5a5a" stroke-width="1.6"/></svg>
<div class="r" style="left:1px;top:237px;width:1884px;height:20px;background:#e6e6e6;"></div>
<div class="r" style="left:1px;top:257px;width:25px;height:609px;background:#e6e6e6;"></div>
<div class="r" style="left:27px;top:257px;width:1858px;height:609px;background:#ffffff;"></div>
<div class="r" style="left:259px;top:257px;width:1px;height:609px;background:#d4d4d4;"></div>
<div class="r" style="left:259px;top:240px;width:1px;height:17px;background:#c3c3c3;"></div>
<div class="r" style="left:577px;top:257px;width:1px;height:609px;background:#d4d4d4;"></div>
<div class="r" style="left:577px;top:240px;width:1px;height:17px;background:#c3c3c3;"></div>
<div class="r" style="left:816px;top:257px;width:1px;height:609px;background:#d4d4d4;"></div>
<div class="r" style="left:816px;top:240px;width:1px;height:17px;background:#c3c3c3;"></div>
<div class="r" style="left:866px;top:257px;width:1px;height:609px;background:#d4d4d4;"></div>
<div class="r" style="left:866px;top:240px;width:1px;height:17px;background:#c3c3c3;"></div>
<div class="r" style="left:952px;top:257px;width:1px;height:609px;background:#d4d4d4;"></div>
<div class="r" style="left:952px;top:240px;width:1px;height:17px;background:#c3c3c3;"></div>
<div class="r" style="left:1022px;top:257px;width:1px;height:609px;background:#d4d4d4;"></div>
<div class="r" style="left:1022px;top:240px;width:1px;height:17px;background:#c3c3c3;"></div>
<div class="r" style="left:1090px;top:257px;width:1px;height:609px;background:#d4d4d4;"></div>
<div class="r" style="left:1090px;top:240px;width:1px;height:17px;background:#c3c3c3;"></div>
<div class="r" style="left:1163px;top:257px;width:1px;height:609px;background:#d4d4d4;"></div>
<div class="r" style="left:1163px;top:240px;width:1px;height:17px;background:#c3c3c3;"></div>
<div class="r" style="left:1235px;top:257px;width:1px;height:609px;background:#d4d4d4;"></div>
<div class="r" style="left:1235px;top:240px;width:1px;height:17px;background:#c3c3c3;"></div>
<div class="r" style="left:1327px;top:257px;width:1px;height:609px;background:#d4d4d4;"></div>
<div class="r" style="left:1327px;top:240px;width:1px;height:17px;background:#c3c3c3;"></div>
<div class="r" style="left:1373px;top:257px;width:1px;height:609px;background:#d4d4d4;"></div>
<div class="r" style="left:1373px;top:240px;width:1px;height:17px;background:#c3c3c3;"></div>
<div class="r" style="left:1479px;top:257px;width:1px;height:609px;background:#d4d4d4;"></div>
<div class="r" style="left:1479px;top:240px;width:1px;height:17px;background:#c3c3c3;"></div>
<div class="r" style="left:1526px;top:257px;width:1px;height:609px;background:#d4d4d4;"></div>
<div class="r" style="left:1526px;top:240px;width:1px;height:17px;background:#c3c3c3;"></div>
<div class="r" style="left:1597px;top:257px;width:1px;height:609px;background:#d4d4d4;"></div>
<div class="r" style="left:1597px;top:240px;width:1px;height:17px;background:#c3c3c3;"></div>
<div class="r" style="left:1694px;top:257px;width:1px;height:609px;background:#d4d4d4;"></div>
<div class="r" style="left:1694px;top:240px;width:1px;height:17px;background:#c3c3c3;"></div>
<div class="r" style="left:1749px;top:257px;width:1px;height:609px;background:#d4d4d4;"></div>
<div class="r" style="left:1749px;top:240px;width:1px;height:17px;background:#c3c3c3;"></div>
<div class="r" style="left:1830px;top:257px;width:1px;height:609px;background:#d4d4d4;"></div>
<div class="r" style="left:1830px;top:240px;width:1px;height:17px;background:#c3c3c3;"></div>
<div class="t " style="top:241.24px;font-size:13px;line-height:14.52px;color:#262626;left:-257.0px;width:800px;text-align:center;">A</div>
<div class="t " style="top:241.24px;font-size:13px;line-height:14.52px;color:#262626;left:18.5px;width:800px;text-align:center;">B</div>
<div class="t " style="top:241.24px;font-size:13px;line-height:14.52px;color:#262626;left:297.0px;width:800px;text-align:center;">C</div>
<div class="t " style="top:241.24px;font-size:13px;line-height:14.52px;color:#262626;left:441.5px;width:800px;text-align:center;">D</div>
<div class="t " style="top:241.24px;font-size:13px;line-height:14.52px;color:#262626;left:509.5px;width:800px;text-align:center;">E</div>
<div class="t " style="top:241.24px;font-size:13px;line-height:14.52px;color:#262626;left:587.5px;width:800px;text-align:center;">F</div>
<div class="t " style="top:241.24px;font-size:13px;line-height:14.52px;color:#262626;left:656.5px;width:800px;text-align:center;">G</div>
<div class="t " style="top:241.24px;font-size:13px;line-height:14.52px;color:#262626;left:727.0px;width:800px;text-align:center;">H</div>
<div class="t " style="top:241.24px;font-size:13px;line-height:14.52px;color:#262626;left:799.5px;width:800px;text-align:center;">I</div>
<div class="t " style="top:241.24px;font-size:13px;line-height:14.52px;color:#262626;left:881.5px;width:800px;text-align:center;">J</div>
<div class="t " style="top:241.24px;font-size:13px;line-height:14.52px;color:#262626;left:950.5px;width:800px;text-align:center;">K</div>
<div class="t " style="top:241.24px;font-size:13px;line-height:14.52px;color:#262626;left:1026.5px;width:800px;text-align:center;">L</div>
<div class="t " style="top:241.24px;font-size:13px;line-height:14.52px;color:#262626;left:1103.0px;width:800px;text-align:center;">M</div>
<div class="t " style="top:241.24px;font-size:13px;line-height:14.52px;color:#262626;left:1162.0px;width:800px;text-align:center;">N</div>
<div class="t " style="top:241.24px;font-size:13px;line-height:14.52px;color:#262626;left:1246.0px;width:800px;text-align:center;">O</div>
<div class="t " style="top:241.24px;font-size:13px;line-height:14.52px;color:#262626;left:1322.0px;width:800px;text-align:center;">P</div>
<div class="t " style="top:241.24px;font-size:13px;line-height:14.52px;color:#262626;left:1390.0px;width:800px;text-align:center;">Q</div>
<div class="t " style="top:241.24px;font-size:13px;line-height:14.52px;color:#262626;left:1471.5px;width:800px;text-align:center;">R</div>
<svg class="r" style="left:11px;top:241px" width="12" height="12" viewBox="0 0 12 12"><path d="M11.5 0.5 V11.5 H0.5 Z" fill="#b8b8b8"/></svg>
<div class="r" style="left:1px;top:256px;width:1884px;height:1px;background:#ababab;"></div>
<div class="r" style="left:26px;top:237px;width:1px;height:629px;background:#ababab;"></div>
<div class="r" style="left:1px;top:857px;width:25px;height:9px;background:#d2d2d2;"></div>
<div class="r" style="left:25px;top:857px;width:2px;height:9px;background:#217346;"></div>
<div class="r" style="left:27px;top:276px;width:1858px;height:1px;background:#d4d4d4;"></div>
<div class="r" style="left:1px;top:276px;width:25px;height:1px;background:#c3c3c3;"></div>
<div class="t " style="top:261.24px;font-size:13px;line-height:14.52px;color:#262626;left:-386.5px;width:800px;text-align:center;">1</div>
<div class="r" style="left:27px;top:296px;width:1858px;height:1px;background:#d4d4d4;"></div>
<div class="r" style="left:1px;top:296px;width:25px;height:1px;background:#c3c3c3;"></div>
<div class="t " style="top:281.24px;font-size:13px;line-height:14.52px;color:#262626;left:-386.5px;width:800px;text-align:center;">2</div>
<div class="r" style="left:27px;top:316px;width:1858px;height:1px;background:#d4d4d4;"></div>
<div class="r" style="left:1px;top:316px;width:25px;height:1px;background:#c3c3c3;"></div>
<div class="t " style="top:301.24px;font-size:13px;line-height:14.52px;color:#262626;left:-386.5px;width:800px;text-align:center;">3</div>
<div class="r" style="left:27px;top:336px;width:1858px;height:1px;background:#d4d4d4;"></div>
<div class="r" style="left:1px;top:336px;width:25px;height:1px;background:#c3c3c3;"></div>
<div class="t " style="top:321.24px;font-size:13px;line-height:14.52px;color:#262626;left:-386.5px;width:800px;text-align:center;">4</div>
<div class="r" style="left:27px;top:356px;width:1858px;height:1px;background:#d4d4d4;"></div>
<div class="r" style="left:1px;top:354px;width:25px;height:1px;background:#b4b4b4;"></div>
<div class="r" style="left:1px;top:358px;width:25px;height:1px;background:#b4b4b4;"></div>
<div class="t " style="top:341.24px;font-size:13px;line-height:14.52px;color:#262626;left:-386.5px;width:800px;text-align:center;">5</div>
<div class="r" style="left:27px;top:376px;width:1858px;height:1px;background:#d4d4d4;"></div>
<div class="r" style="left:1px;top:376px;width:25px;height:1px;background:#c3c3c3;"></div>
<div class="t " style="top:361.24px;font-size:13px;line-height:14.52px;color:#0000ff;left:-386.5px;width:800px;text-align:center;">14</div>
<div class="r" style="left:27px;top:396px;width:1858px;height:1px;background:#d4d4d4;"></div>
<div class="r" style="left:1px;top:394px;width:25px;height:1px;background:#b4b4b4;"></div>
<div class="r" style="left:1px;top:398px;width:25px;height:1px;background:#b4b4b4;"></div>
<div class="t " style="top:381.24px;font-size:13px;line-height:14.52px;color:#0000ff;left:-386.5px;width:800px;text-align:center;">15</div>
<div class="r" style="left:27px;top:416px;width:1858px;height:1px;background:#d4d4d4;"></div>
<div class="r" style="left:1px;top:416px;width:25px;height:1px;background:#c3c3c3;"></div>
<div class="t " style="top:401.24px;font-size:13px;line-height:14.52px;color:#0000ff;left:-386.5px;width:800px;text-align:center;">45</div>
<div class="r" style="left:27px;top:436px;width:1858px;height:1px;background:#d4d4d4;"></div>
<div class="r" style="left:1px;top:434px;width:25px;height:1px;background:#b4b4b4;"></div>
<div class="r" style="left:1px;top:438px;width:25px;height:1px;background:#b4b4b4;"></div>
<div class="t " style="top:421.24px;font-size:13px;line-height:14.52px;color:#0000ff;left:-386.5px;width:800px;text-align:center;">46</div>
<div class="r" style="left:27px;top:456px;width:1858px;height:1px;background:#d4d4d4;"></div>
<div class="r" style="left:1px;top:456px;width:25px;height:1px;background:#c3c3c3;"></div>
<div class="t " style="top:441.24px;font-size:13px;line-height:14.52px;color:#0000ff;left:-386.5px;width:800px;text-align:center;">53</div>
<div class="r" style="left:27px;top:476px;width:1858px;height:1px;background:#d4d4d4;"></div>
<div class="r" style="left:1px;top:474px;width:25px;height:1px;background:#b4b4b4;"></div>
<div class="r" style="left:1px;top:478px;width:25px;height:1px;background:#b4b4b4;"></div>
<div class="t " style="top:461.24px;font-size:13px;line-height:14.52px;color:#0000ff;left:-386.5px;width:800px;text-align:center;">54</div>
<div class="r" style="left:27px;top:496px;width:1858px;height:1px;background:#d4d4d4;"></div>
<div class="r" style="left:1px;top:496px;width:25px;height:1px;background:#c3c3c3;"></div>
<div class="t " style="top:481.24px;font-size:13px;line-height:14.52px;color:#0000ff;left:-386.5px;width:800px;text-align:center;">59</div>
<div class="r" style="left:27px;top:516px;width:1858px;height:1px;background:#d4d4d4;"></div>
<div class="r" style="left:1px;top:514px;width:25px;height:1px;background:#b4b4b4;"></div>
<div class="r" style="left:1px;top:518px;width:25px;height:1px;background:#b4b4b4;"></div>
<div class="t " style="top:501.24px;font-size:13px;line-height:14.52px;color:#0000ff;left:-386.5px;width:800px;text-align:center;">60</div>
<div class="r" style="left:27px;top:536px;width:1858px;height:1px;background:#d4d4d4;"></div>
<div class="r" style="left:1px;top:536px;width:25px;height:1px;background:#c3c3c3;"></div>
<div class="t " style="top:521.24px;font-size:13px;line-height:14.52px;color:#0000ff;left:-386.5px;width:800px;text-align:center;">63</div>
<div class="r" style="left:27px;top:556px;width:1858px;height:1px;background:#d4d4d4;"></div>
<div class="r" style="left:1px;top:554px;width:25px;height:1px;background:#b4b4b4;"></div>
<div class="r" style="left:1px;top:558px;width:25px;height:1px;background:#b4b4b4;"></div>
<div class="t " style="top:541.24px;font-size:13px;line-height:14.52px;color:#0000ff;left:-386.5px;width:800px;text-align:center;">64</div>
<div class="r" style="left:27px;top:576px;width:1858px;height:1px;background:#d4d4d4;"></div>
<div class="r" style="left:1px;top:576px;width:25px;height:1px;background:#c3c3c3;"></div>
<div class="t " style="top:561.24px;font-size:13px;line-height:14.52px;color:#0000ff;left:-386.5px;width:800px;text-align:center;">69</div>
<div class="r" style="left:27px;top:596px;width:1858px;height:1px;background:#d4d4d4;"></div>
<div class="r" style="left:1px;top:594px;width:25px;height:1px;background:#b4b4b4;"></div>
<div class="r" style="left:1px;top:598px;width:25px;height:1px;background:#b4b4b4;"></div>
<div class="t " style="top:581.24px;font-size:13px;line-height:14.52px;color:#0000ff;left:-386.5px;width:800px;text-align:center;">70</div>
<div class="r" style="left:27px;top:616px;width:1858px;height:1px;background:#d4d4d4;"></div>
<div class="r" style="left:1px;top:616px;width:25px;height:1px;background:#c3c3c3;"></div>
<div class="t " style="top:601.24px;font-size:13px;line-height:14.52px;color:#0000ff;left:-386.5px;width:800px;text-align:center;">72</div>
<div class="r" style="left:27px;top:636px;width:1858px;height:1px;background:#d4d4d4;"></div>
<div class="r" style="left:1px;top:634px;width:25px;height:1px;background:#b4b4b4;"></div>
<div class="r" style="left:1px;top:638px;width:25px;height:1px;background:#b4b4b4;"></div>
<div class="t " style="top:621.24px;font-size:13px;line-height:14.52px;color:#0000ff;left:-386.5px;width:800px;text-align:center;">73</div>
<div class="r" style="left:27px;top:656px;width:1858px;height:1px;background:#d4d4d4;"></div>
<div class="r" style="left:1px;top:656px;width:25px;height:1px;background:#c3c3c3;"></div>
<div class="t " style="top:641.24px;font-size:13px;line-height:14.52px;color:#0000ff;left:-386.5px;width:800px;text-align:center;">78</div>
<div class="r" style="left:27px;top:676px;width:1858px;height:1px;background:#d4d4d4;"></div>
<div class="r" style="left:1px;top:674px;width:25px;height:1px;background:#b4b4b4;"></div>
<div class="r" style="left:1px;top:678px;width:25px;height:1px;background:#b4b4b4;"></div>
<div class="t " style="top:661.24px;font-size:13px;line-height:14.52px;color:#0000ff;left:-386.5px;width:800px;text-align:center;">79</div>
<div class="r" style="left:27px;top:696px;width:1858px;height:1px;background:#d4d4d4;"></div>
<div class="r" style="left:1px;top:696px;width:25px;height:1px;background:#c3c3c3;"></div>
<div class="t " style="top:681.24px;font-size:13px;line-height:14.52px;color:#0000ff;left:-386.5px;width:800px;text-align:center;">84</div>
<div class="r" style="left:27px;top:716px;width:1858px;height:1px;background:#d4d4d4;"></div>
<div class="r" style="left:1px;top:716px;width:25px;height:1px;background:#c3c3c3;"></div>
<div class="t " style="top:701.24px;font-size:13px;line-height:14.52px;color:#0000ff;left:-386.5px;width:800px;text-align:center;">85</div>
<div class="r" style="left:27px;top:736px;width:1858px;height:1px;background:#d4d4d4;"></div>
<div class="r" style="left:1px;top:736px;width:25px;height:1px;background:#c3c3c3;"></div>
<div class="t " style="top:721.24px;font-size:13px;line-height:14.52px;color:#0000ff;left:-386.5px;width:800px;text-align:center;">86</div>
<div class="r" style="left:27px;top:756px;width:1858px;height:1px;background:#d4d4d4;"></div>
<div class="r" style="left:1px;top:756px;width:25px;height:1px;background:#c3c3c3;"></div>
<div class="t " style="top:741.24px;font-size:13px;line-height:14.52px;color:#0000ff;left:-386.5px;width:800px;text-align:center;">87</div>
<div class="r" style="left:27px;top:776px;width:1858px;height:1px;background:#d4d4d4;"></div>
<div class="r" style="left:1px;top:776px;width:25px;height:1px;background:#c3c3c3;"></div>
<div class="t " style="top:761.24px;font-size:13px;line-height:14.52px;color:#0000ff;left:-386.5px;width:800px;text-align:center;">88</div>
<div class="r" style="left:27px;top:796px;width:1858px;height:1px;background:#d4d4d4;"></div>
<div class="r" style="left:1px;top:796px;width:25px;height:1px;background:#c3c3c3;"></div>
<div class="t " style="top:781.24px;font-size:13px;line-height:14.52px;color:#0000ff;left:-386.5px;width:800px;text-align:center;">89</div>
<div class="r" style="left:27px;top:816px;width:1858px;height:1px;background:#d4d4d4;"></div>
<div class="r" style="left:1px;top:816px;width:25px;height:1px;background:#c3c3c3;"></div>
<div class="t " style="top:801.24px;font-size:13px;line-height:14.52px;color:#0000ff;left:-386.5px;width:800px;text-align:center;">90</div>
<div class="r" style="left:27px;top:836px;width:1858px;height:1px;background:#d4d4d4;"></div>
<div class="r" style="left:1px;top:836px;width:25px;height:1px;background:#c3c3c3;"></div>
<div class="t " style="top:821.24px;font-size:13px;line-height:14.52px;color:#262626;left:-386.5px;width:800px;text-align:center;">91</div>
<div class="r" style="left:27px;top:856px;width:1858px;height:1px;background:#d4d4d4;"></div>
<div class="r" style="left:1px;top:856px;width:25px;height:1px;background:#c3c3c3;"></div>
<div class="t " style="top:841.24px;font-size:13px;line-height:14.52px;color:#262626;left:-386.5px;width:800px;text-align:center;">92</div>
<div class="r" style="left:27px;top:876px;width:1858px;height:1px;background:#d4d4d4;"></div>
<div class="r" style="left:1px;top:876px;width:25px;height:1px;background:#c3c3c3;"></div>
<div class="t " style="top:861.24px;font-size:13px;line-height:14.52px;color:#262626;left:-386.5px;width:800px;text-align:center;">93</div>
<div class="r" style="left:27px;top:356px;width:1858px;height:1px;background:#a9a9a9;"></div>
<div class="r" style="left:1884px;top:256px;width:1px;height:610px;background:#ababab;"></div>
<div class="t " style="top:261.24px;font-size:13px;line-height:14.52px;color:#000080;font-weight:bold;left:29px;">Empresa:</div>
<div class="t " style="top:261.24px;font-size:13px;line-height:14.52px;color:#000080;font-weight:bold;left:262px;">Moeda: R$</div>
<div class="t " style="top:261.24px;font-size:13px;line-height:14.52px;color:#000080;font-weight:bold;left:1600px;">Data: 04/09/25</div>
<div class="t " style="top:281.24px;font-size:13px;line-height:14.52px;color:#000080;font-weight:bold;left:29px;">Previsão pagamento</div>
<div class="t " style="top:281.24px;font-size:13px;line-height:14.52px;color:#000080;font-weight:bold;left:262px;">Filial 1</div>
<div class="t " style="top:281.24px;font-size:13px;line-height:14.52px;color:#000080;font-weight:bold;left:1600px;">Hora: 10:51:27</div>
<div class="t " style="top:301.24px;font-size:13px;line-height:14.52px;color:#000080;font-weight:bold;left:29px;">Periodo de 01/09/25 até 31/10/25</div>
<div class="t " style="top:301.24px;font-size:13px;line-height:14.52px;color:#000080;font-weight:bold;left:262px;">Fornecedor de 0 até 9999999999</div>
<div class="t " style="top:301.24px;font-size:13px;line-height:14.52px;color:#000080;font-weight:bold;left:580px;">Grade de Emissão: 300 - CAIXA</div>
<div class="t " style="top:341.24px;font-size:13px;line-height:14.52px;color:#000080;font-weight:bold;left:29px;">Fornecedor</div>
<div class="t " style="top:341.24px;font-size:13px;line-height:14.52px;color:#000080;font-weight:bold;left:262px;">Descrição</div>
<div class="t " style="top:341.24px;font-size:13px;line-height:14.52px;color:#000080;font-weight:bold;left:580px;transform:scaleX(1.0160);transform-origin:0 0;">Unidade</div>
<div class="t " style="top:341.24px;font-size:13px;line-height:14.52px;color:#000080;font-weight:bold;left:819px;">Tipo</div>
<div class="t " style="top:341.24px;font-size:13px;line-height:14.52px;color:#000080;font-weight:bold;left:869px;transform:scaleX(1.0090);transform-origin:0 0;">Tipo (D/C)</div>
<div class="t " style="top:341.24px;font-size:13px;line-height:14.52px;color:#000080;font-weight:bold;left:955px;transform:scaleX(1.0238);transform-origin:0 0;">Título</div>
<div class="t " style="top:341.24px;font-size:13px;line-height:14.52px;color:#000080;font-weight:bold;left:1025px;transform:scaleX(0.9615);transform-origin:0 0;">Parcela</div>
<div class="t " style="top:341.24px;font-size:13px;line-height:14.52px;color:#000080;font-weight:bold;left:1093px;transform:scaleX(0.9349);transform-origin:0 0;">Emissão</div>
<div class="t " style="top:341.24px;font-size:13px;line-height:14.52px;color:#000080;font-weight:bold;left:1166px;transform:scaleX(0.9876);transform-origin:0 0;">Original</div>
<div class="t " style="top:341.24px;font-size:13px;line-height:14.52px;color:#000080;font-weight:bold;left:1238px;transform:scaleX(0.9720);transform-origin:0 0;">Prorrogado</div>
<div class="t " style="top:341.24px;font-size:13px;line-height:14.52px;color:#000080;font-weight:bold;left:1330px;transform:scaleX(0.8528);transform-origin:0 0;">ASE</div>
<div class="t " style="top:341.24px;font-size:13px;line-height:14.52px;color:#000080;font-weight:bold;left:1376px;transform:scaleX(0.9958);transform-origin:0 0;">Valor original</div>
<div class="t " style="top:341.24px;font-size:13px;line-height:14.52px;color:#000080;font-weight:bold;left:1482px;transform:scaleX(0.8596);transform-origin:0 0;">PCC</div>
<div class="t " style="top:341.24px;font-size:13px;line-height:14.52px;color:#000080;font-weight:bold;left:1529px;transform:scaleX(1.0234);transform-origin:0 0;">Out. ret</div>
<div class="t " style="top:341.24px;font-size:13px;line-height:14.52px;color:#000080;font-weight:bold;left:1600px;transform:scaleX(0.9700);transform-origin:0 0;">Líquido</div>
<div class="t " style="top:341.24px;font-size:13px;line-height:14.52px;color:#000080;font-weight:bold;left:1697px;transform:scaleX(0.9123);transform-origin:0 0;">Juros</div>
<div class="t " style="top:341.24px;font-size:13px;line-height:14.52px;color:#000080;font-weight:bold;left:1752px;transform:scaleX(0.9623);transform-origin:0 0;">Desconto</div>
<div class="t " style="top:341.24px;font-size:13px;line-height:14.52px;color:#000080;font-weight:bold;left:1833px;">Realizado</div>
<div class="t " style="top:361.24px;font-size:13px;line-height:14.52px;color:#000080;font-weight:bold;left:29px;">Tipo de Operação</div>
<div class="t " style="top:361.24px;font-size:13px;line-height:14.52px;color:#000080;font-weight:bold;left:262px;">Crédito</div>
<div class="t " style="top:361.24px;font-size:13px;line-height:14.52px;color:#000080;font-weight:bold;left:677px;width:800px;text-align:right;">307011,6</div>
<div class="t " style="top:361.24px;font-size:13px;line-height:14.52px;color:#000080;font-weight:bold;left:724px;width:800px;text-align:right;">0</div>
<div class="t " style="top:361.24px;font-size:13px;line-height:14.52px;color:#000080;font-weight:bold;left:795px;width:800px;text-align:right;">0</div>
<div class="t " style="top:361.24px;font-size:13px;line-height:14.52px;color:#000080;font-weight:bold;left:892px;width:800px;text-align:right;">307011,6</div>
<div class="t " style="top:361.24px;font-size:13px;line-height:14.52px;color:#000080;font-weight:bold;left:947px;width:800px;text-align:right;">0</div>
<div class="t " style="top:361.24px;font-size:13px;line-height:14.52px;color:#000080;font-weight:bold;left:1028px;width:800px;text-align:right;">0</div>
<div class="t " style="top:381.24px;font-size:13px;line-height:14.52px;color:#000080;font-weight:bold;left:29px;">Total do Fornecedor</div>
<div class="t " style="top:381.24px;font-size:13px;line-height:14.52px;color:#000080;font-weight:bold;left:262px;">&#x27;20001</div>
<div class="t " style="top:381.24px;font-size:13px;line-height:14.52px;color:#000080;font-weight:bold;left:677px;width:800px;text-align:right;">307011,6</div>
<div class="t " style="top:381.24px;font-size:13px;line-height:14.52px;color:#000080;font-weight:bold;left:724px;width:800px;text-align:right;">0</div>
<div class="t " style="top:381.24px;font-size:13px;line-height:14.52px;color:#000080;font-weight:bold;left:795px;width:800px;text-align:right;">0</div>
<div class="t " style="top:381.24px;font-size:13px;line-height:14.52px;color:#000080;font-weight:bold;left:892px;width:800px;text-align:right;">307011,6</div>
<div class="t " style="top:381.24px;font-size:13px;line-height:14.52px;color:#000080;font-weight:bold;left:947px;width:800px;text-align:right;">0</div>
<div class="t " style="top:381.24px;font-size:13px;line-height:14.52px;color:#000080;font-weight:bold;left:1028px;width:800px;text-align:right;">0</div>
<div class="t " style="top:401.24px;font-size:13px;line-height:14.52px;color:#000080;font-weight:bold;left:29px;">Tipo de Operação</div>
<div class="t " style="top:401.24px;font-size:13px;line-height:14.52px;color:#000080;font-weight:bold;left:262px;">Crédito</div>
<div class="t " style="top:401.24px;font-size:13px;line-height:14.52px;color:#000080;font-weight:bold;left:677px;width:800px;text-align:right;">938622,89</div>
<div class="t " style="top:401.24px;font-size:13px;line-height:14.52px;color:#000080;font-weight:bold;left:724px;width:800px;text-align:right;">0</div>
<div class="t " style="top:401.24px;font-size:13px;line-height:14.52px;color:#000080;font-weight:bold;left:795px;width:800px;text-align:right;">0</div>
<div class="t " style="top:401.24px;font-size:13px;line-height:14.52px;color:#000080;font-weight:bold;left:892px;width:800px;text-align:right;">938622,89</div>
<div class="t " style="top:401.24px;font-size:13px;line-height:14.52px;color:#000080;font-weight:bold;left:947px;width:800px;text-align:right;">0</div>
<div class="t " style="top:401.24px;font-size:13px;line-height:14.52px;color:#000080;font-weight:bold;left:1028px;width:800px;text-align:right;">0</div>
<div class="t " style="top:421.24px;font-size:13px;line-height:14.52px;color:#000080;font-weight:bold;left:29px;">Total do Fornecedor</div>
<div class="t " style="top:421.24px;font-size:13px;line-height:14.52px;color:#000080;font-weight:bold;left:262px;">&#x27;20012</div>
<div class="t " style="top:421.24px;font-size:13px;line-height:14.52px;color:#000080;font-weight:bold;left:677px;width:800px;text-align:right;">938622,89</div>
<div class="t " style="top:421.24px;font-size:13px;line-height:14.52px;color:#000080;font-weight:bold;left:724px;width:800px;text-align:right;">0</div>
<div class="t " style="top:421.24px;font-size:13px;line-height:14.52px;color:#000080;font-weight:bold;left:795px;width:800px;text-align:right;">0</div>
<div class="t " style="top:421.24px;font-size:13px;line-height:14.52px;color:#000080;font-weight:bold;left:892px;width:800px;text-align:right;">938622,89</div>
<div class="t " style="top:421.24px;font-size:13px;line-height:14.52px;color:#000080;font-weight:bold;left:947px;width:800px;text-align:right;">0</div>
<div class="t " style="top:421.24px;font-size:13px;line-height:14.52px;color:#000080;font-weight:bold;left:1028px;width:800px;text-align:right;">0</div>
<div class="t " style="top:441.24px;font-size:13px;line-height:14.52px;color:#000080;font-weight:bold;left:29px;">Tipo de Operação</div>
<div class="t " style="top:441.24px;font-size:13px;line-height:14.52px;color:#000080;font-weight:bold;left:262px;">Crédito</div>
<div class="t " style="top:441.24px;font-size:13px;line-height:14.52px;color:#000080;font-weight:bold;left:677px;width:800px;text-align:right;">145229,35</div>
<div class="t " style="top:441.24px;font-size:13px;line-height:14.52px;color:#000080;font-weight:bold;left:724px;width:800px;text-align:right;">0</div>
<div class="t " style="top:441.24px;font-size:13px;line-height:14.52px;color:#000080;font-weight:bold;left:795px;width:800px;text-align:right;">0</div>
<div class="t " style="top:441.24px;font-size:13px;line-height:14.52px;color:#000080;font-weight:bold;left:892px;width:800px;text-align:right;">145229,35</div>
<div class="t " style="top:441.24px;font-size:13px;line-height:14.52px;color:#000080;font-weight:bold;left:947px;width:800px;text-align:right;">0</div>
<div class="t " style="top:441.24px;font-size:13px;line-height:14.52px;color:#000080;font-weight:bold;left:1028px;width:800px;text-align:right;">0</div>
<div class="t " style="top:461.24px;font-size:13px;line-height:14.52px;color:#000080;font-weight:bold;left:29px;">Total do Fornecedor</div>
<div class="t " style="top:461.24px;font-size:13px;line-height:14.52px;color:#000080;font-weight:bold;left:262px;">&#x27;20013</div>
<div class="t " style="top:461.24px;font-size:13px;line-height:14.52px;color:#000080;font-weight:bold;left:677px;width:800px;text-align:right;">145229,35</div>
<div class="t " style="top:461.24px;font-size:13px;line-height:14.52px;color:#000080;font-weight:bold;left:724px;width:800px;text-align:right;">0</div>
<div class="t " style="top:461.24px;font-size:13px;line-height:14.52px;color:#000080;font-weight:bold;left:795px;width:800px;text-align:right;">0</div>
<div class="t " style="top:461.24px;font-size:13px;line-height:14.52px;color:#000080;font-weight:bold;left:892px;width:800px;text-align:right;">145229,35</div>
<div class="t " style="top:461.24px;font-size:13px;line-height:14.52px;color:#000080;font-weight:bold;left:947px;width:800px;text-align:right;">0</div>
<div class="t " style="top:461.24px;font-size:13px;line-height:14.52px;color:#000080;font-weight:bold;left:1028px;width:800px;text-align:right;">0</div>
<div class="t " style="top:481.24px;font-size:13px;line-height:14.52px;color:#000080;font-weight:bold;left:29px;">Tipo de Operação</div>
<div class="t " style="top:481.24px;font-size:13px;line-height:14.52px;color:#000080;font-weight:bold;left:262px;">Crédito</div>
<div class="t " style="top:481.24px;font-size:13px;line-height:14.52px;color:#000080;font-weight:bold;left:677px;width:800px;text-align:right;">357627,04</div>
<div class="t " style="top:481.24px;font-size:13px;line-height:14.52px;color:#000080;font-weight:bold;left:724px;width:800px;text-align:right;">0</div>
<div class="t " style="top:481.24px;font-size:13px;line-height:14.52px;color:#000080;font-weight:bold;left:795px;width:800px;text-align:right;">0</div>
<div class="t " style="top:481.24px;font-size:13px;line-height:14.52px;color:#000080;font-weight:bold;left:892px;width:800px;text-align:right;">357627,04</div>
<div class="t " style="top:481.24px;font-size:13px;line-height:14.52px;color:#000080;font-weight:bold;left:947px;width:800px;text-align:right;">0</div>
<div class="t " style="top:481.24px;font-size:13px;line-height:14.52px;color:#000080;font-weight:bold;left:1028px;width:800px;text-align:right;">0</div>
<div class="t " style="top:501.24px;font-size:13px;line-height:14.52px;color:#000080;font-weight:bold;left:29px;">Total do Fornecedor</div>
<div class="t " style="top:501.24px;font-size:13px;line-height:14.52px;color:#000080;font-weight:bold;left:262px;">&#x27;20113</div>
<div class="t " style="top:501.24px;font-size:13px;line-height:14.52px;color:#000080;font-weight:bold;left:677px;width:800px;text-align:right;">357627,04</div>
<div class="t " style="top:501.24px;font-size:13px;line-height:14.52px;color:#000080;font-weight:bold;left:724px;width:800px;text-align:right;">0</div>
<div class="t " style="top:501.24px;font-size:13px;line-height:14.52px;color:#000080;font-weight:bold;left:795px;width:800px;text-align:right;">0</div>
<div class="t " style="top:501.24px;font-size:13px;line-height:14.52px;color:#000080;font-weight:bold;left:892px;width:800px;text-align:right;">357627,04</div>
<div class="t " style="top:501.24px;font-size:13px;line-height:14.52px;color:#000080;font-weight:bold;left:947px;width:800px;text-align:right;">0</div>
<div class="t " style="top:501.24px;font-size:13px;line-height:14.52px;color:#000080;font-weight:bold;left:1028px;width:800px;text-align:right;">0</div>
<div class="t " style="top:521.24px;font-size:13px;line-height:14.52px;color:#000080;font-weight:bold;left:29px;">Tipo de Operação</div>
<div class="t " style="top:521.24px;font-size:13px;line-height:14.52px;color:#000080;font-weight:bold;left:262px;">Crédito</div>
<div class="t " style="top:521.24px;font-size:13px;line-height:14.52px;color:#000080;font-weight:bold;left:677px;width:800px;text-align:right;">91666,66</div>
<div class="t " style="top:521.24px;font-size:13px;line-height:14.52px;color:#000080;font-weight:bold;left:724px;width:800px;text-align:right;">0</div>
<div class="t " style="top:521.24px;font-size:13px;line-height:14.52px;color:#000080;font-weight:bold;left:795px;width:800px;text-align:right;">0</div>
<div class="t " style="top:521.24px;font-size:13px;line-height:14.52px;color:#000080;font-weight:bold;left:892px;width:800px;text-align:right;">91666,66</div>
<div class="t " style="top:521.24px;font-size:13px;line-height:14.52px;color:#000080;font-weight:bold;left:947px;width:800px;text-align:right;">0</div>
<div class="t " style="top:521.24px;font-size:13px;line-height:14.52px;color:#000080;font-weight:bold;left:1028px;width:800px;text-align:right;">0</div>
<div class="t " style="top:541.24px;font-size:13px;line-height:14.52px;color:#000080;font-weight:bold;left:29px;">Total do Fornecedor</div>
<div class="t " style="top:541.24px;font-size:13px;line-height:14.52px;color:#000080;font-weight:bold;left:262px;">&#x27;22040</div>
<div class="t " style="top:541.24px;font-size:13px;line-height:14.52px;color:#000080;font-weight:bold;left:677px;width:800px;text-align:right;">91666,66</div>
<div class="t " style="top:541.24px;font-size:13px;line-height:14.52px;color:#000080;font-weight:bold;left:724px;width:800px;text-align:right;">0</div>
<div class="t " style="top:541.24px;font-size:13px;line-height:14.52px;color:#000080;font-weight:bold;left:795px;width:800px;text-align:right;">0</div>
<div class="t " style="top:541.24px;font-size:13px;line-height:14.52px;color:#000080;font-weight:bold;left:892px;width:800px;text-align:right;">91666,66</div>
<div class="t " style="top:541.24px;font-size:13px;line-height:14.52px;color:#000080;font-weight:bold;left:947px;width:800px;text-align:right;">0</div>
<div class="t " style="top:541.24px;font-size:13px;line-height:14.52px;color:#000080;font-weight:bold;left:1028px;width:800px;text-align:right;">0</div>
<div class="t " style="top:561.24px;font-size:13px;line-height:14.52px;color:#000080;font-weight:bold;left:29px;">Tipo de Operação</div>
<div class="t " style="top:561.24px;font-size:13px;line-height:14.52px;color:#000080;font-weight:bold;left:262px;">Crédito</div>
<div class="t " style="top:561.24px;font-size:13px;line-height:14.52px;color:#000080;font-weight:bold;left:677px;width:800px;text-align:right;">119152,52</div>
<div class="t " style="top:561.24px;font-size:13px;line-height:14.52px;color:#000080;font-weight:bold;left:724px;width:800px;text-align:right;">0</div>
<div class="t " style="top:561.24px;font-size:13px;line-height:14.52px;color:#000080;font-weight:bold;left:795px;width:800px;text-align:right;">0</div>
<div class="t " style="top:561.24px;font-size:13px;line-height:14.52px;color:#000080;font-weight:bold;left:892px;width:800px;text-align:right;">119152,52</div>
<div class="t " style="top:561.24px;font-size:13px;line-height:14.52px;color:#000080;font-weight:bold;left:947px;width:800px;text-align:right;">0</div>
<div class="t " style="top:561.24px;font-size:13px;line-height:14.52px;color:#000080;font-weight:bold;left:1028px;width:800px;text-align:right;">0</div>
<div class="t " style="top:581.24px;font-size:13px;line-height:14.52px;color:#000080;font-weight:bold;left:29px;">Total do Fornecedor</div>
<div class="t " style="top:581.24px;font-size:13px;line-height:14.52px;color:#000080;font-weight:bold;left:262px;">&#x27;22042</div>
<div class="t " style="top:581.24px;font-size:13px;line-height:14.52px;color:#000080;font-weight:bold;left:677px;width:800px;text-align:right;">119152,52</div>
<div class="t " style="top:581.24px;font-size:13px;line-height:14.52px;color:#000080;font-weight:bold;left:724px;width:800px;text-align:right;">0</div>
<div class="t " style="top:581.24px;font-size:13px;line-height:14.52px;color:#000080;font-weight:bold;left:795px;width:800px;text-align:right;">0</div>
<div class="t " style="top:581.24px;font-size:13px;line-height:14.52px;color:#000080;font-weight:bold;left:892px;width:800px;text-align:right;">119152,52</div>
<div class="t " style="top:581.24px;font-size:13px;line-height:14.52px;color:#000080;font-weight:bold;left:947px;width:800px;text-align:right;">0</div>
<div class="t " style="top:581.24px;font-size:13px;line-height:14.52px;color:#000080;font-weight:bold;left:1028px;width:800px;text-align:right;">0</div>
<div class="t " style="top:601.24px;font-size:13px;line-height:14.52px;color:#000080;font-weight:bold;left:29px;">Tipo de Operação</div>
<div class="t " style="top:601.24px;font-size:13px;line-height:14.52px;color:#000080;font-weight:bold;left:262px;">Crédito</div>
<div class="t " style="top:601.24px;font-size:13px;line-height:14.52px;color:#000080;font-weight:bold;left:677px;width:800px;text-align:right;">5796,73</div>
<div class="t " style="top:601.24px;font-size:13px;line-height:14.52px;color:#000080;font-weight:bold;left:724px;width:800px;text-align:right;">0</div>
<div class="t " style="top:601.24px;font-size:13px;line-height:14.52px;color:#000080;font-weight:bold;left:795px;width:800px;text-align:right;">0</div>
<div class="t " style="top:601.24px;font-size:13px;line-height:14.52px;color:#000080;font-weight:bold;left:892px;width:800px;text-align:right;">5796,73</div>
<div class="t " style="top:601.24px;font-size:13px;line-height:14.52px;color:#000080;font-weight:bold;left:947px;width:800px;text-align:right;">0</div>
<div class="t " style="top:601.24px;font-size:13px;line-height:14.52px;color:#000080;font-weight:bold;left:1028px;width:800px;text-align:right;">0</div>
<div class="t " style="top:621.24px;font-size:13px;line-height:14.52px;color:#000080;font-weight:bold;left:29px;">Total do Fornecedor</div>
<div class="t " style="top:621.24px;font-size:13px;line-height:14.52px;color:#000080;font-weight:bold;left:262px;">&#x27;25009</div>
<div class="t " style="top:621.24px;font-size:13px;line-height:14.52px;color:#000080;font-weight:bold;left:677px;width:800px;text-align:right;">5796,73</div>
<div class="t " style="top:621.24px;font-size:13px;line-height:14.52px;color:#000080;font-weight:bold;left:724px;width:800px;text-align:right;">0</div>
<div class="t " style="top:621.24px;font-size:13px;line-height:14.52px;color:#000080;font-weight:bold;left:795px;width:800px;text-align:right;">0</div>
<div class="t " style="top:621.24px;font-size:13px;line-height:14.52px;color:#000080;font-weight:bold;left:892px;width:800px;text-align:right;">5796,73</div>
<div class="t " style="top:621.24px;font-size:13px;line-height:14.52px;color:#000080;font-weight:bold;left:947px;width:800px;text-align:right;">0</div>
<div class="t " style="top:621.24px;font-size:13px;line-height:14.52px;color:#000080;font-weight:bold;left:1028px;width:800px;text-align:right;">0</div>
<div class="t " style="top:641.24px;font-size:13px;line-height:14.52px;color:#000080;font-weight:bold;left:29px;">Tipo de Operação</div>
<div class="t " style="top:641.24px;font-size:13px;line-height:14.52px;color:#000080;font-weight:bold;left:262px;">Crédito</div>
<div class="t " style="top:641.24px;font-size:13px;line-height:14.52px;color:#000080;font-weight:bold;left:677px;width:800px;text-align:right;">109083,1</div>
<div class="t " style="top:641.24px;font-size:13px;line-height:14.52px;color:#000080;font-weight:bold;left:724px;width:800px;text-align:right;">0</div>
<div class="t " style="top:641.24px;font-size:13px;line-height:14.52px;color:#000080;font-weight:bold;left:795px;width:800px;text-align:right;">0</div>
<div class="t " style="top:641.24px;font-size:13px;line-height:14.52px;color:#000080;font-weight:bold;left:892px;width:800px;text-align:right;">109083,1</div>
<div class="t " style="top:641.24px;font-size:13px;line-height:14.52px;color:#000080;font-weight:bold;left:947px;width:800px;text-align:right;">0</div>
<div class="t " style="top:641.24px;font-size:13px;line-height:14.52px;color:#000080;font-weight:bold;left:1028px;width:800px;text-align:right;">0</div>
<div class="t " style="top:661.24px;font-size:13px;line-height:14.52px;color:#000080;font-weight:bold;left:29px;">Total do Fornecedor</div>
<div class="t " style="top:661.24px;font-size:13px;line-height:14.52px;color:#000080;font-weight:bold;left:262px;">&#x27;27002</div>
<div class="t " style="top:661.24px;font-size:13px;line-height:14.52px;color:#000080;font-weight:bold;left:677px;width:800px;text-align:right;">109083,1</div>
<div class="t " style="top:661.24px;font-size:13px;line-height:14.52px;color:#000080;font-weight:bold;left:724px;width:800px;text-align:right;">0</div>
<div class="t " style="top:661.24px;font-size:13px;line-height:14.52px;color:#000080;font-weight:bold;left:795px;width:800px;text-align:right;">0</div>
<div class="t " style="top:661.24px;font-size:13px;line-height:14.52px;color:#000080;font-weight:bold;left:892px;width:800px;text-align:right;">109083,1</div>
<div class="t " style="top:661.24px;font-size:13px;line-height:14.52px;color:#000080;font-weight:bold;left:947px;width:800px;text-align:right;">0</div>
<div class="t " style="top:661.24px;font-size:13px;line-height:14.52px;color:#000080;font-weight:bold;left:1028px;width:800px;text-align:right;">0</div>
<div class="t " style="top:681.24px;font-size:13px;line-height:14.52px;color:#000080;font-weight:bold;left:29px;">Tipo de Operação</div>
<div class="t " style="top:681.24px;font-size:13px;line-height:14.52px;color:#000080;font-weight:bold;left:262px;">Crédito</div>
<div class="t " style="top:681.24px;font-size:13px;line-height:14.52px;color:#000080;font-weight:bold;left:677px;width:800px;text-align:right;">178543,88</div>
<div class="t " style="top:681.24px;font-size:13px;line-height:14.52px;color:#000080;font-weight:bold;left:724px;width:800px;text-align:right;">0</div>
<div class="t " style="top:681.24px;font-size:13px;line-height:14.52px;color:#000080;font-weight:bold;left:795px;width:800px;text-align:right;">0</div>
<div class="t " style="top:681.24px;font-size:13px;line-height:14.52px;color:#000080;font-weight:bold;left:892px;width:800px;text-align:right;">178543,88</div>
<div class="t " style="top:681.24px;font-size:13px;line-height:14.52px;color:#000080;font-weight:bold;left:947px;width:800px;text-align:right;">0</div>
<div class="t " style="top:681.24px;font-size:13px;line-height:14.52px;color:#000080;font-weight:bold;left:1028px;width:800px;text-align:right;">0</div>
<div class="t " style="top:701.24px;font-size:13px;line-height:14.52px;color:#000080;font-weight:bold;left:29px;">Total do Fornecedor</div>
<div class="t " style="top:701.24px;font-size:13px;line-height:14.52px;color:#000080;font-weight:bold;left:262px;">&#x27;90008</div>
<div class="t " style="top:701.24px;font-size:13px;line-height:14.52px;color:#000080;font-weight:bold;left:677px;width:800px;text-align:right;">178543,88</div>
<div class="t " style="top:701.24px;font-size:13px;line-height:14.52px;color:#000080;font-weight:bold;left:724px;width:800px;text-align:right;">0</div>
<div class="t " style="top:701.24px;font-size:13px;line-height:14.52px;color:#000080;font-weight:bold;left:795px;width:800px;text-align:right;">0</div>
<div class="t " style="top:701.24px;font-size:13px;line-height:14.52px;color:#000080;font-weight:bold;left:892px;width:800px;text-align:right;">178543,88</div>
<div class="t " style="top:701.24px;font-size:13px;line-height:14.52px;color:#000080;font-weight:bold;left:947px;width:800px;text-align:right;">0</div>
<div class="t " style="top:701.24px;font-size:13px;line-height:14.52px;color:#000080;font-weight:bold;left:1028px;width:800px;text-align:right;">0</div>
<div class="t " style="top:721.69px;font-size:12.5px;line-height:13.96px;color:#000000;left:29px;">&#x27;67843169000184</div>
<div class="t " style="top:721.69px;font-size:12.5px;line-height:13.96px;color:#000000;left:262px;">SEND SOLUTIONS LTDA</div>
<div class="t " style="top:721.69px;font-size:12.5px;line-height:13.96px;color:#000000;left:580px;">(1) PRIMAX TRANSPORTES</div>
<div class="t " style="top:721.69px;font-size:12.5px;line-height:13.96px;color:#000000;left:64px;width:800px;text-align:right;">20</div>
<div class="t " style="top:721.69px;font-size:12.5px;line-height:13.96px;color:#000000;left:869px;">C</div>
<div class="t " style="top:721.69px;font-size:12.5px;line-height:13.96px;color:#000000;left:220px;width:800px;text-align:right;">2092502</div>
<div class="t " style="top:721.69px;font-size:12.5px;line-height:13.96px;color:#000000;left:1025px;">01</div>
<div class="t " style="top:721.69px;font-size:12.5px;line-height:13.96px;color:#000000;left:361px;width:800px;text-align:right;">02/09/25</div>
<div class="t " style="top:721.69px;font-size:12.5px;line-height:13.96px;color:#000000;left:433px;width:800px;text-align:right;">02/10/25</div>
<div class="t " style="top:721.69px;font-size:12.5px;line-height:13.96px;color:#000000;left:525px;width:800px;text-align:right;">02/10/25</div>
<div class="t " style="top:721.69px;font-size:12.5px;line-height:13.96px;color:#000000;left:571px;width:800px;text-align:right;">0</div>
<div class="t " style="top:721.69px;font-size:12.5px;line-height:13.96px;color:#000000;left:677px;width:800px;text-align:right;">980</div>
<div class="t " style="top:721.69px;font-size:12.5px;line-height:13.96px;color:#000000;left:724px;width:800px;text-align:right;">0</div>
<div class="t " style="top:721.69px;font-size:12.5px;line-height:13.96px;color:#000000;left:795px;width:800px;text-align:right;">0</div>
<div class="t " style="top:721.69px;font-size:12.5px;line-height:13.96px;color:#000000;left:892px;width:800px;text-align:right;">980</div>
<div class="t " style="top:721.69px;font-size:12.5px;line-height:13.96px;color:#000000;left:947px;width:800px;text-align:right;">0</div>
<div class="t " style="top:721.69px;font-size:12.5px;line-height:13.96px;color:#000000;left:1028px;width:800px;text-align:right;">0</div>
<div class="t " style="top:741.24px;font-size:13px;line-height:14.52px;color:#000080;font-weight:bold;left:29px;">Tipo de Operação</div>
<div class="t " style="top:741.24px;font-size:13px;line-height:14.52px;color:#000080;font-weight:bold;left:262px;">Crédito</div>
<div class="t " style="top:741.24px;font-size:13px;line-height:14.52px;color:#000080;font-weight:bold;left:677px;width:800px;text-align:right;">980</div>
<div class="t " style="top:741.24px;font-size:13px;line-height:14.52px;color:#000080;font-weight:bold;left:724px;width:800px;text-align:right;">0</div>
<div class="t " style="top:741.24px;font-size:13px;line-height:14.52px;color:#000080;font-weight:bold;left:795px;width:800px;text-align:right;">0</div>
<div class="t " style="top:741.24px;font-size:13px;line-height:14.52px;color:#000080;font-weight:bold;left:892px;width:800px;text-align:right;">980</div>
<div class="t " style="top:741.24px;font-size:13px;line-height:14.52px;color:#000080;font-weight:bold;left:947px;width:800px;text-align:right;">0</div>
<div class="t " style="top:741.24px;font-size:13px;line-height:14.52px;color:#000080;font-weight:bold;left:1028px;width:800px;text-align:right;">0</div>
<div class="t " style="top:761.24px;font-size:13px;line-height:14.52px;color:#000080;font-weight:bold;left:29px;">Total do Fornecedor</div>
<div class="t " style="top:761.24px;font-size:13px;line-height:14.52px;color:#000080;font-weight:bold;left:262px;">&#x27;67843169000184</div>
<div class="t " style="top:761.24px;font-size:13px;line-height:14.52px;color:#000080;font-weight:bold;left:677px;width:800px;text-align:right;">980</div>
<div class="t " style="top:761.24px;font-size:13px;line-height:14.52px;color:#000080;font-weight:bold;left:724px;width:800px;text-align:right;">0</div>
<div class="t " style="top:761.24px;font-size:13px;line-height:14.52px;color:#000080;font-weight:bold;left:795px;width:800px;text-align:right;">0</div>
<div class="t " style="top:761.24px;font-size:13px;line-height:14.52px;color:#000080;font-weight:bold;left:892px;width:800px;text-align:right;">980</div>
<div class="t " style="top:761.24px;font-size:13px;line-height:14.52px;color:#000080;font-weight:bold;left:947px;width:800px;text-align:right;">0</div>
<div class="t " style="top:761.24px;font-size:13px;line-height:14.52px;color:#000080;font-weight:bold;left:1028px;width:800px;text-align:right;">0</div>
<div class="t " style="top:781.24px;font-size:13px;line-height:14.52px;color:#000080;font-weight:bold;left:29px;">Total da Uop</div>
<div class="t " style="top:781.24px;font-size:13px;line-height:14.52px;color:#000080;font-weight:bold;left:677px;width:800px;text-align:right;">2253713,77</div>
<div class="t " style="top:781.24px;font-size:13px;line-height:14.52px;color:#000080;font-weight:bold;left:724px;width:800px;text-align:right;">0</div>
<div class="t " style="top:781.24px;font-size:13px;line-height:14.52px;color:#000080;font-weight:bold;left:795px;width:800px;text-align:right;">0</div>
<div class="t " style="top:781.24px;font-size:13px;line-height:14.52px;color:#000080;font-weight:bold;left:892px;width:800px;text-align:right;">2253713,77</div>
<div class="t " style="top:781.24px;font-size:13px;line-height:14.52px;color:#000080;font-weight:bold;left:947px;width:800px;text-align:right;">0</div>
<div class="t " style="top:781.24px;font-size:13px;line-height:14.52px;color:#000080;font-weight:bold;left:1028px;width:800px;text-align:right;">0</div>
<div class="t " style="top:801.24px;font-size:13px;line-height:14.52px;color:#000080;font-weight:bold;left:29px;">Total Geral</div>
<div class="t " style="top:801.24px;font-size:13px;line-height:14.52px;color:#000080;font-weight:bold;left:677px;width:800px;text-align:right;">2253713,77</div>
<div class="t " style="top:801.24px;font-size:13px;line-height:14.52px;color:#000080;font-weight:bold;left:724px;width:800px;text-align:right;">0</div>
<div class="t " style="top:801.24px;font-size:13px;line-height:14.52px;color:#000080;font-weight:bold;left:795px;width:800px;text-align:right;">0</div>
<div class="t " style="top:801.24px;font-size:13px;line-height:14.52px;color:#000080;font-weight:bold;left:892px;width:800px;text-align:right;">2253713,77</div>
<div class="t " style="top:801.24px;font-size:13px;line-height:14.52px;color:#000080;font-weight:bold;left:947px;width:800px;text-align:right;">0</div>
<div class="t " style="top:801.24px;font-size:13px;line-height:14.52px;color:#000080;font-weight:bold;left:1028px;width:800px;text-align:right;">0</div>
<div class="t " style="top:781.24px;font-size:13px;line-height:14.52px;color:#000080;font-weight:bold;left:-225px;width:800px;text-align:right;">1</div>
<div class="r" style="left:1px;top:866px;width:1905px;height:29px;background:#e6e6e6;"></div>
<div class="r" style="left:1px;top:866px;width:1884px;height:1px;background:#ababab;"></div>
<div class="r" style="left:1885px;top:237px;width:21px;height:629px;background:#e6e6e6;"></div>
<div class="r" style="left:1888px;top:239px;width:15px;height:15px;background:#ffffff;border:1px solid #b9b9b9;"></div>
<svg class="r" style="left:1888px;top:239px" width="15" height="15" viewBox="0 0 15 15"><path d="M4 9.5 L7.5 6 L11 9.5 Z" fill="#666"/></svg>
<div class="r" style="left:1888px;top:254px;width:15px;height:597px;background:#dcdcdc;"></div>
<div class="r" style="left:1888px;top:254px;width:15px;height:590px;background:#ffffff;border:1px solid #ababab;"></div>
<div class="r" style="left:1888px;top:851px;width:15px;height:15px;background:#ffffff;border:1px solid #c6c6c6;"></div>
<svg class="r" style="left:1888px;top:851px" width="15" height="15" viewBox="0 0 15 15"><path d="M4 6 L7.5 9.5 L11 6 Z" fill="#666"/></svg>
<div class="r" style="left:101px;top:866px;width:65px;height:25px;background:#ffffff;border-left:1px solid #ababab;border-right:1px solid #ababab;"></div>
<div class="r" style="left:101px;top:888px;width:65px;height:3px;background:#217346;"></div>
<div class="t " style="top:873.69px;font-size:12.5px;line-height:13.96px;color:#217346;font-weight:bold;left:-266.5px;width:800px;text-align:center;">Sheet1</div>
<svg class="r" style="left:26px;top:873px" width="10" height="14" viewBox="0 0 10 14"><path d="M7 3 L3 7 L7 11 Z" fill="#bdbdbd"/></svg>
<svg class="r" style="left:54px;top:873px" width="10" height="14" viewBox="0 0 10 14"><path d="M3 3 L7 7 L3 11 Z" fill="#bdbdbd"/></svg>
<svg class="r" style="left:198px;top:872px" width="17" height="17" viewBox="0 0 17 17"><circle cx="8.5" cy="8.5" r="7.3" fill="none" stroke="#7a7a7a" stroke-width="1.2"/><path d="M8.5 4.5 V12.5 M4.5 8.5 H12.5" stroke="#7a7a7a" stroke-width="1.6"/></svg>
<svg class="r" style="left:1143px;top:872px" width="4" height="16" viewBox="0 0 4 16"><circle cx="2" cy="3" r="0.8" fill="#999"/><circle cx="2" cy="8" r="0.8" fill="#999"/><circle cx="2" cy="13" r="0.8" fill="#999"/></svg>
<div class="r" style="left:1161px;top:873px;width:721px;height:15px;background:#dcdcdc;"></div>
<div class="r" style="left:1161px;top:873px;width:15px;height:15px;background:#ffffff;border:1px solid #c6c6c6;"></div>
<svg class="r" style="left:1161px;top:873px" width="15" height="15" viewBox="0 0 15 15"><path d="M9.5 4 L6 7.5 L9.5 11 Z" fill="#555"/></svg>
<div class="r" style="left:1176px;top:873px;width:616px;height:15px;background:#ffffff;border:1px solid #ababab;"></div>
<div class="r" style="left:1867px;top:873px;width:15px;height:15px;background:#ffffff;border:1px solid #c6c6c6;"></div>
<svg class="r" style="left:1867px;top:873px" width="15" height="15" viewBox="0 0 15 15"><path d="M5.5 4 L9 7.5 L5.5 11 Z" fill="#555"/></svg>
<div class="r" style="left:1px;top:894px;width:1905px;height:1px;background:#d5d5d5;"></div>
<div class="r" style="left:1px;top:895px;width:1905px;height:21px;background:#f1f1f1;"></div>
<div class="t " style="top:898.50px;font-size:11.6px;line-height:12.96px;color:#444444;left:8px;">Pronto</div>
<div class="t " style="top:898.50px;font-size:11.6px;line-height:12.96px;color:#444444;left:59px;transform:scaleX(0.9829);transform-origin:0 0;">23 de 85 registros localizados.</div>
<div class="r" style="left:1603px;top:895px;width:38px;height:21px;background:#c8c8c8;"></div>
<div class="t " style="top:898.50px;font-size:11.6px;line-height:12.96px;color:#444444;left:1086px;width:800px;text-align:right;">100%</div>
<svg class="r" style="left:0px;top:880px" width="1907" height="37" viewBox="0 880 1907 37"><rect x="1615.5" y="898.5" width="12" height="12" fill="#fff" stroke="#666" stroke-width="1"/><path d="M1615.5 902.5 H1627.5 M1615.5 906.5 H1627.5 M1619.5 898.5 V910.5 M1623.5 898.5 V910.5" stroke="#666" stroke-width="1"/><rect x="1653.5" y="898.5" width="13" height="12" fill="none" stroke="#666" stroke-width="1"/><rect x="1656.5" y="900.5" width="7" height="8" fill="none" stroke="#666" stroke-width="1"/><path d="M1658 902.8 H1662 M1658 904.6 H1662 M1658 906.4 H1662" stroke="#666" stroke-width="0.8"/><rect x="1691.5" y="898.5" width="13" height="12" fill="none" stroke="#666" stroke-width="1"/><path d="M1695.5 898.5 V904.5 H1691.5 M1698.5 898.5 V904.5 H1704.5 M1691.5 906.5 H1698.5" fill="none" stroke="#666" stroke-width="1"/><rect x="1722" y="904" width="6" height="2" fill="#666"/><rect x="1732" y="904.5" width="100" height="1" fill="#a0a0a0"/><rect x="1780" y="899" width="4" height="11" fill="#666"/><path d="M1836 905 H1844 M1840 901 V909" stroke="#666" stroke-width="2"/></svg>
<div class="r" style="left:242px;top:338px;width:17px;height:17px;background:#f3f5f8;border:1px solid #a8aeb5;"></div>
<svg class="r" style="left:242px;top:338px" width="17" height="17" viewBox="0 0 17 17"><path d="M6 4 H15 L12 7.3 V12 H9.3 V7.3 Z" fill="#6b6b6b"/><path d="M3 10 H8 L5.5 13 Z" fill="#6b6b6b"/></svg>
<div class="r" style="left:560px;top:338px;width:17px;height:17px;background:#f3f5f8;border:1px solid #a8aeb5;"></div>
<svg class="r" style="left:560px;top:338px" width="17" height="17" viewBox="0 0 17 17"><path d="M5 7 H12 L8.5 11 Z" fill="#666"/></svg>
<div class="r" style="left:799px;top:338px;width:17px;height:17px;background:#f3f5f8;border:1px solid #a8aeb5;"></div>
<svg class="r" style="left:799px;top:338px" width="17" height="17" viewBox="0 0 17 17"><path d="M5 7 H12 L8.5 11 Z" fill="#666"/></svg>
<div class="r" style="left:849px;top:338px;width:17px;height:17px;background:#f3f5f8;border:1px solid #a8aeb5;"></div>
<svg class="r" style="left:849px;top:338px" width="17" height="17" viewBox="0 0 17 17"><path d="M5 7 H12 L8.5 11 Z" fill="#666"/></svg>
<div class="r" style="left:935px;top:338px;width:17px;height:17px;background:#f3f5f8;border:1px solid #a8aeb5;"></div>
<svg class="r" style="left:935px;top:338px" width="17" height="17" viewBox="0 0 17 17"><path d="M5 7 H12 L8.5 11 Z" fill="#666"/></svg>
<div class="r" style="left:1005px;top:338px;width:17px;height:17px;background:#f3f5f8;border:1px solid #a8aeb5;"></div>
<svg class="r" style="left:1005px;top:338px" width="17" height="17" viewBox="0 0 17 17"><path d="M5 7 H12 L8.5 11 Z" fill="#666"/></svg>
<div class="r" style="left:1073px;top:338px;width:17px;height:17px;background:#f3f5f8;border:1px solid #a8aeb5;"></div>
<svg class="r" style="left:1073px;top:338px" width="17" height="17" viewBox="0 0 17 17"><path d="M5 7 H12 L8.5 11 Z" fill="#666"/></svg>
<div class="r" style="left:1146px;top:338px;width:17px;height:17px;background:#f3f5f8;border:1px solid #a8aeb5;"></div>
<svg class="r" style="left:1146px;top:338px" width="17" height="17" viewBox="0 0 17 17"><path d="M5 7 H12 L8.5 11 Z" fill="#666"/></svg>
<div class="r" style="left:1218px;top:338px;width:17px;height:17px;background:#f3f5f8;border:1px solid #a8aeb5;"></div>
<svg class="r" style="left:1218px;top:338px" width="17" height="17" viewBox="0 0 17 17"><path d="M5 7 H12 L8.5 11 Z" fill="#666"/></svg>
<div class="r" style="left:1310px;top:338px;width:17px;height:17px;background:#f3f5f8;border:1px solid #a8aeb5;"></div>
<svg class="r" style="left:1310px;top:338px" width="17" height="17" viewBox="0 0 17 17"><path d="M5 7 H12 L8.5 11 Z" fill="#666"/></svg>
<div class="r" style="left:1356px;top:338px;width:17px;height:17px;background:#f3f5f8;border:1px solid #a8aeb5;"></div>
<svg class="r" style="left:1356px;top:338px" width="17" height="17" viewBox="0 0 17 17"><path d="M5 7 H12 L8.5 11 Z" fill="#666"/></svg>
<div class="r" style="left:1462px;top:338px;width:17px;height:17px;background:#f3f5f8;border:1px solid #a8aeb5;"></div>
<svg class="r" style="left:1462px;top:338px" width="17" height="17" viewBox="0 0 17 17"><path d="M5 7 H12 L8.5 11 Z" fill="#666"/></svg>
<div class="r" style="left:1509px;top:338px;width:17px;height:17px;background:#f3f5f8;border:1px solid #a8aeb5;"></div>
<svg class="r" style="left:1509px;top:338px" width="17" height="17" viewBox="0 0 17 17"><path d="M5 7 H12 L8.5 11 Z" fill="#666"/></svg>
<div class="r" style="left:1580px;top:338px;width:17px;height:17px;background:#f3f5f8;border:1px solid #a8aeb5;"></div>
<svg class="r" style="left:1580px;top:338px" width="17" height="17" viewBox="0 0 17 17"><path d="M5 7 H12 L8.5 11 Z" fill="#666"/></svg>
<div class="r" style="left:1677px;top:338px;width:17px;height:17px;background:#f3f5f8;border:1px solid #a8aeb5;"></div>
<svg class="r" style="left:1677px;top:338px" width="17" height="17" viewBox="0 0 17 17"><path d="M5 7 H12 L8.5 11 Z" fill="#666"/></svg>
<div class="r" style="left:1732px;top:338px;width:17px;height:17px;background:#f3f5f8;border:1px solid #a8aeb5;"></div>
<svg class="r" style="left:1732px;top:338px" width="17" height="17" viewBox="0 0 17 17"><path d="M5 7 H12 L8.5 11 Z" fill="#666"/></svg>
<div class="r" style="left:1813px;top:338px;width:17px;height:17px;background:#f3f5f8;border:1px solid #a8aeb5;"></div>
<svg class="r" style="left:1813px;top:338px" width="17" height="17" viewBox="0 0 17 17"><path d="M5 7 H12 L8.5 11 Z" fill="#666"/></svg>
<div class="r" style="left:1328px;top:237px;width:45px;height:19px;background:#d2d2d2;"></div>
<div class="r" style="left:1328px;top:254px;width:45px;height:2px;background:#217346;"></div>
<div class="t " style="top:241.24px;font-size:13px;line-height:14.52px;color:#217346;left:950.5px;width:800px;text-align:center;">K</div>
<div class="r" style="left:1326px;top:855px;width:49px;height:11px;background:none;border:2px solid #217346;border-bottom:none;"></div>
<div class="r" style="left:25px;top:715px;width:1864px;height:22px;background:none;border:2px solid #ff7373;"></div>
<svg class="r" style="left:1023px;top:717px" width="6" height="6" viewBox="0 0 6 6"><path d="M0 0 H5 L0 5 Z" fill="#1e7a3c"/></svg>
<div class="r" style="left:88px;top:260px;width:165px;height:14px;background:rgba(200,200,235,0.35);filter:blur(2px);"></div>
<div class="r" style="left:91px;top:263px;width:15px;height:9px;background:rgba(140,140,205,0.5);filter:blur(2.2px);border-radius:3px;"></div>
<div class="r" style="left:111px;top:263px;width:47px;height:8px;background:rgba(125,125,198,0.62);filter:blur(2.2px);border-radius:3px;"></div>
<div class="r" style="left:164px;top:263px;width:86px;height:8px;background:rgba(125,125,198,0.6);filter:blur(2.2px);border-radius:3px;"></div>
<svg class="r" style="left:89px;top:271px" width="16" height="5" viewBox="0 0 16 5"><path d="M1.3 0.5 C1.6 2.2 2.2 3 3 3.6 M13 0.5 C12.8 2.2 12.2 3 11.4 3.6" fill="none" stroke="#000080" stroke-width="1.3"/></svg></body></html>
